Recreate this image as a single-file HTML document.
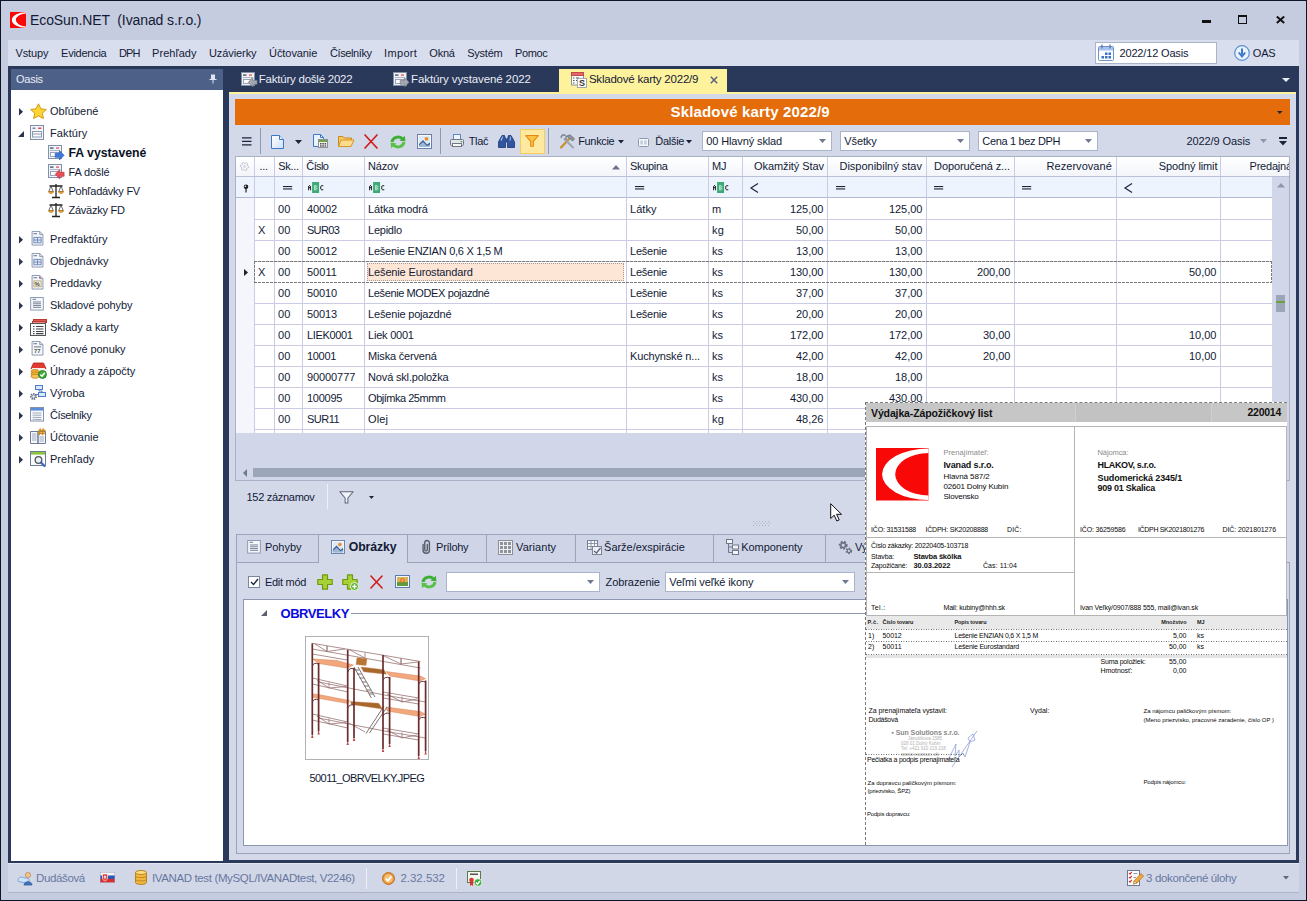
<!DOCTYPE html>
<html><head><meta charset="utf-8"><title>EcoSun.NET</title>
<style>
html,body{margin:0;padding:0;}
body{width:1307px;height:901px;overflow:hidden;background:#c6ccdf;font-family:"Liberation Sans",sans-serif;font-size:11px;color:#121a36;position:relative;}
div,span.t,svg{position:absolute;box-sizing:border-box;}
span.t{white-space:nowrap;}
svg{overflow:visible;}
</style></head><body>
<!-- window frame -->
<div style="left:0px;top:0px;width:1307px;height:901px;border:1px solid #0d1626;background:#c6ccdf;"></div>
<svg style="left:10px;top:12px" width="16" height="16" viewBox="0 0 52 52"><rect width="52" height="52" fill="#f90808"/><path d="M52 0.5A46 25.500 0 0 0 52 51.500V47A33 21 0 0 1 52 5Z" fill="#fff"/></svg>
<span class="t" style="left:30.0px;top:10.5px;line-height:18px;font-size:14px;color:#121a36;letter-spacing:-0.097px;white-space:pre;">EcoSun.NET  (Ivanad s.r.o.)</span>
<div style="left:1201.5px;top:20px;width:9.5px;height:3px;background:#111;"></div>
<div style="left:1237.7px;top:15px;width:9.5px;height:9.3px;border:1.500px solid #111;border-top-width:2px;"></div>
<svg style="left:1276px;top:16px" width="9" height="7.5" viewBox="0 0 9 7.5"><path d="M0.8 0.6L8.200 6.900M8.200 0.600L0.800 6.900" stroke="#111" stroke-width="2"/></svg>
<!-- menu bar -->
<div style="left:8px;top:40px;width:1291px;height:26px;background:#d9deee;"></div>
<span class="t" style="left:15.4px;top:46.3px;line-height:14px;font-size:11px;color:#121a36;letter-spacing:-0.093px;">Vstupy</span>
<span class="t" style="left:61.1px;top:46.3px;line-height:14px;font-size:11px;color:#121a36;letter-spacing:-0.258px;">Evidencia</span>
<span class="t" style="left:118.9px;top:46.3px;line-height:14px;font-size:11px;color:#121a36;letter-spacing:-0.873px;">DPH</span>
<span class="t" style="left:152.1px;top:46.3px;line-height:14px;font-size:11px;color:#121a36;letter-spacing:0.025px;">Prehľady</span>
<span class="t" style="left:208.9px;top:46.3px;line-height:14px;font-size:11px;color:#121a36;letter-spacing:-0.076px;">Uzávierky</span>
<span class="t" style="left:269.1px;top:46.3px;line-height:14px;font-size:11px;color:#121a36;letter-spacing:-0.082px;">Účtovanie</span>
<span class="t" style="left:330.0px;top:46.3px;line-height:14px;font-size:11px;color:#121a36;letter-spacing:-0.394px;">Číselníky</span>
<span class="t" style="left:384.1px;top:46.3px;line-height:14px;font-size:11px;color:#121a36;letter-spacing:0.319px;">Import</span>
<span class="t" style="left:429.3px;top:46.3px;line-height:14px;font-size:11px;color:#121a36;letter-spacing:-0.203px;">Okná</span>
<span class="t" style="left:467.2px;top:46.3px;line-height:14px;font-size:11px;color:#121a36;letter-spacing:-0.231px;">Systém</span>
<span class="t" style="left:515.0px;top:46.3px;line-height:14px;font-size:11px;color:#121a36;letter-spacing:-0.39px;">Pomoc</span>
<div style="left:1095px;top:42px;width:122px;height:22px;background:#fff;border:1px solid #a9b3c9;"></div>
<svg style="left:1098px;top:44px" width="16" height="17" viewBox="0 0 16 17"><rect x="0.500" y="2.500" width="15" height="14" rx="1" fill="#fafcff" stroke="#6f8fc8"/><rect x="1" y="3" width="14" height="3.500" fill="#a9c4ee"/><path d="M4 0.500V4.500M12 0.500V4.500" stroke="#5a78b0" stroke-width="1.300"/><g fill="#3f6fc0"><rect x="7" y="8.500" width="2.500" height="2.500"/><rect x="10.500" y="8.500" width="2.500" height="2.500"/><rect x="3.500" y="12" width="2.500" height="2.500"/><rect x="7" y="12" width="2.500" height="2.500"/><rect x="10.500" y="12" width="2.500" height="2.500"/></g></svg>
<span class="t" style="left:1119.5px;top:46.3px;line-height:14px;font-size:11px;color:#121a36;letter-spacing:-0.162px;">2022/12 Oasis</span>
<svg style="left:1234px;top:45px" width="16" height="16" viewBox="0 0 16 16"><circle cx="8" cy="8" r="7.300" fill="#eaf2fc" stroke="#5a8fd0" stroke-width="1.200"/><path d="M8 3.500V9.500M4.800 7.500L8 11.500L11.200 7.500" stroke="#3f78c8" stroke-width="2" fill="none"/></svg>
<span class="t" style="left:1252.8px;top:46.3px;line-height:14px;font-size:11px;color:#121a36;letter-spacing:-0.217px;">OAS</span>
<!-- navy work area -->
<div style="left:8px;top:66px;width:1291px;height:797px;background:#2a3859;"></div>
<div style="left:11px;top:69px;width:212px;height:21px;background:#4d6088;"></div>
<span class="t" style="left:16px;top:72.0px;line-height:14px;font-size:11px;color:#e8ecf6;letter-spacing:-0.25px;">Oasis</span>
<svg style="left:209px;top:74px" width="8" height="10" viewBox="0 0 8 10"><path d="M2 0.500H6V5H7.500V6H4.500V9.500H3.500V6H0.500V5H2Z" fill="#dfe5f2"/></svg>
<div style="left:11px;top:90px;width:212px;height:771px;background:#fff;"></div>
<svg style="left:19px;top:108.2px" width="4" height="7.5" viewBox="0 0 4 7.5"><path d="M0 0V7.5L4 3.75Z" fill="#2a3350"/></svg>
<svg style="left:29.5px;top:102.5px" width="17" height="17" viewBox="0 0 17 17"><path d="M8.5 0.8L10.9 5.8L16.3 6.5L12.3 10.2L13.4 15.6L8.5 12.9L3.6 15.6L4.7 10.2L0.7 6.5L6.1 5.8Z" fill="#fcd436" stroke="#d59a10" stroke-width="1" stroke-linejoin="round"/></svg>
<span class="t" style="left:50.0px;top:104.0px;line-height:14px;font-size:11px;color:#121a36;letter-spacing:-0.014px;">Obľúbené</span>
<svg style="left:18px;top:131px" width="6" height="6" viewBox="0 0 6 6"><path d="M6 0V6H0Z" fill="#2a3350"/></svg>
<svg style="left:30px;top:124.7px" width="15" height="16" viewBox="0 0 15 16"><rect x="0.5" y="0.5" width="13" height="14" fill="#f3f6fb" stroke="#7f8da6"/><rect x="2.5" y="2.5" width="3" height="1.5" fill="#7b88a0"/><rect x="8" y="2.5" width="3.5" height="1.5" fill="#e05656"/><rect x="2.5" y="6.5" width="9" height="5.5" fill="#fff" stroke="#8d9ab3"/><path d="M2.5 9H11.5" stroke="#8d9ab3"/></svg>
<span class="t" style="left:50.0px;top:126.0px;line-height:14px;font-size:11px;color:#121a36;letter-spacing:0.116px;">Faktúry</span>
<svg style="left:48px;top:145px" width="17" height="16" viewBox="0 0 17 16"><rect x="0.5" y="0.5" width="13" height="13" fill="#f1f4fa" stroke="#8290aa"/><rect x="2" y="2.3" width="3.5" height="1.6" fill="#5f6c85"/><rect x="8" y="2.3" width="3" height="1.6" fill="#e8707a"/><path d="M2 5.5H11.500" stroke="#9aa5bb" stroke-width="0.8"/><rect x="2.500" y="7.500" width="8.500" height="4" fill="#fff" stroke="#8f9bb2" stroke-width="0.9"/><path d="M7.200 8.300H11.500V5.500L16.100 10.300L11.500 15V12.300H7.200Z" fill="#3d78dc" stroke="#2555b0" stroke-width="0.6" stroke-linejoin="round"/></svg>
<span class="t" style="left:68.5px;top:146.0px;line-height:14px;font-size:12.3px;color:#0c1226;font-weight:bold;letter-spacing:-0.025px;">FA vystavené</span>
<svg style="left:48px;top:164px" width="17" height="16" viewBox="0 0 17 16"><rect x="0.5" y="0.5" width="13" height="13" fill="#f1f4fa" stroke="#8290aa"/><rect x="2" y="2.3" width="3.5" height="1.6" fill="#5f6c85"/><rect x="8" y="2.3" width="3" height="1.6" fill="#e8707a"/><path d="M2 5.5H11.500" stroke="#9aa5bb" stroke-width="0.8"/><rect x="2.500" y="7.500" width="8.500" height="4" fill="#fff" stroke="#8f9bb2" stroke-width="0.9"/><path d="M16.100 8.300H11.800V5.500L7.200 10.300L11.800 15V12.300H16.100Z" fill="#e8505a" stroke="#b82a36" stroke-width="0.6" stroke-linejoin="round"/></svg>
<span class="t" style="left:68.5px;top:165.0px;line-height:14px;font-size:11px;color:#121a36;letter-spacing:-0.152px;">FA došlé</span>
<svg style="left:47.7px;top:182.5px" width="16" height="16" viewBox="0 0 16 16"><path d="M8 1V14M4 14.5H12M1.5 3H14.5" stroke="#222" stroke-width="1.3" fill="none"/><path d="M3 3L0.8 8.5H5.2ZM13 3L10.8 8.5H15.2Z" fill="none" stroke="#444" stroke-width="0.8"/><path d="M0.5 8.5H5.5A2.5 2 0 0 1 0.5 8.5ZM10.5 8.5H15.5A2.5 2 0 0 1 10.5 8.5Z" fill="#e9a23b" stroke="#b5741a" stroke-width="0.6"/></svg>
<span class="t" style="left:68.5px;top:184.0px;line-height:14px;font-size:11px;color:#121a36;letter-spacing:-0.254px;">Pohľadávky FV</span>
<svg style="left:47.7px;top:201.7px" width="16" height="16" viewBox="0 0 16 16"><path d="M8 1V14M4 14.5H12M1.5 3H14.5" stroke="#222" stroke-width="1.3" fill="none"/><path d="M3 3L0.8 8.5H5.2ZM13 3L10.8 8.5H15.2Z" fill="none" stroke="#444" stroke-width="0.8"/><path d="M0.5 8.5H5.5A2.5 2 0 0 1 0.5 8.5ZM10.5 8.5H15.5A2.5 2 0 0 1 10.5 8.5Z" fill="#e9a23b" stroke="#b5741a" stroke-width="0.6"/></svg>
<span class="t" style="left:68.5px;top:203.0px;line-height:14px;font-size:11px;color:#121a36;letter-spacing:-0.259px;">Záväzky FD</span>
<svg style="left:19px;top:236.2px" width="4" height="7.5" viewBox="0 0 4 7.5"><path d="M0 0V7.5L4 3.75Z" fill="#2a3350"/></svg>
<svg style="left:31px;top:231.2px" width="13" height="14.5" viewBox="0 0 13 16"><path d="M0.5 0.5H9L12.5 4V15.5H0.5Z" fill="#f4f7fc" stroke="#8492ab"/><path d="M9 0.5V4H12.5" fill="none" stroke="#8492ab"/><rect x="2" y="2.3" width="4" height="1.3" fill="#7b88a0"/><rect x="2.5" y="7" width="8" height="6" fill="#dfe8f6" stroke="#6f86b4"/><path d="M2.5 10H10.5M6.5 7V13" stroke="#6f86b4"/></svg>
<span class="t" style="left:50.0px;top:232.0px;line-height:14px;font-size:11px;color:#121a36;letter-spacing:0.129px;">Predfaktúry</span>
<svg style="left:19px;top:258.2px" width="4" height="7.5" viewBox="0 0 4 7.5"><path d="M0 0V7.5L4 3.75Z" fill="#2a3350"/></svg>
<svg style="left:31px;top:253.2px" width="13" height="14.5" viewBox="0 0 13 16"><path d="M0.5 0.5H9L12.5 4V15.5H0.5Z" fill="#f4f7fc" stroke="#8492ab"/><path d="M9 0.5V4H12.5" fill="none" stroke="#8492ab"/><rect x="2" y="2.3" width="4" height="1.3" fill="#7b88a0"/><rect x="2.5" y="7" width="8" height="6" fill="#dfe8f6" stroke="#6f86b4"/><path d="M2.5 10H10.5M6.5 7V13" stroke="#6f86b4"/></svg>
<span class="t" style="left:50.0px;top:254.0px;line-height:14px;font-size:11px;color:#121a36;letter-spacing:0.037px;">Objednávky</span>
<svg style="left:19px;top:280.2px" width="4" height="7.5" viewBox="0 0 4 7.5"><path d="M0 0V7.5L4 3.75Z" fill="#2a3350"/></svg>
<svg style="left:31px;top:275.2px" width="13" height="14.5" viewBox="0 0 13 16"><path d="M0.5 0.5H9L12.5 4V15.5H0.5Z" fill="#f4f7fc" stroke="#8492ab"/><path d="M9 0.5V4H12.5" fill="none" stroke="#8492ab"/><rect x="2" y="2.3" width="4" height="1.3" fill="#7b88a0"/><rect x="2.5" y="6.5" width="8" height="6.5" fill="#fbf3dc" stroke="#b9a77a"/><text x="3.3" y="12.2" font-size="6.5" font-weight="bold" fill="#444" font-family="Liberation Sans">%</text><rect x="8" y="2.3" width="2" height="1.3" fill="#e05656"/></svg>
<span class="t" style="left:50.0px;top:276.0px;line-height:14px;font-size:11px;color:#121a36;letter-spacing:-0.067px;">Preddavky</span>
<svg style="left:19px;top:302.2px" width="4" height="7.5" viewBox="0 0 4 7.5"><path d="M0 0V7.5L4 3.75Z" fill="#2a3350"/></svg>
<svg style="left:30.2px;top:297.3px" width="14" height="13.5" viewBox="0 0 15 15"><rect x="0.5" y="0.5" width="14" height="14" fill="#f6f8fc" stroke="#8492ab"/><rect x="2.5" y="2" width="4" height="1.2" fill="#7b88a0"/><path d="M3 5.5H12M3 7.5H12M3 9.5H12M3 11.5H12" stroke="#6b7890" stroke-width="1"/></svg>
<span class="t" style="left:50.0px;top:298.0px;line-height:14px;font-size:11px;color:#121a36;letter-spacing:-0.09px;">Skladové pohyby</span>
<svg style="left:19px;top:324.2px" width="4" height="7.5" viewBox="0 0 4 7.5"><path d="M0 0V7.5L4 3.75Z" fill="#2a3350"/></svg>
<svg style="left:30px;top:318.5px" width="17" height="17" viewBox="0 0 17 17"><rect x="3.5" y="0.5" width="13" height="3" fill="#e8564e" stroke="#b93a33"/><rect x="2.5" y="2.5" width="13" height="3" fill="#f28a84" stroke="#b93a33"/><rect x="0.5" y="4.5" width="15" height="12" fill="#fbfcfe" stroke="#555"/><path d="M3 7.5H4.5M6 7.5H13.5M3 10H4.5M6 10H13.5M3 12.5H4.5M6 12.5H13.5M3 14.6H4.5M6 14.6H13.5" stroke="#444" stroke-width="1.1"/></svg>
<span class="t" style="left:50.0px;top:320.0px;line-height:14px;font-size:11px;color:#121a36;letter-spacing:-0.03px;">Sklady a karty</span>
<svg style="left:19px;top:346.2px" width="4" height="7.5" viewBox="0 0 4 7.5"><path d="M0 0V7.5L4 3.75Z" fill="#2a3350"/></svg>
<svg style="left:31px;top:341.2px" width="13" height="14.5" viewBox="0 0 13 16"><path d="M0.5 0.5H9L12.5 4V15.5H0.5Z" fill="#f4f7fc" stroke="#8492ab"/><path d="M9 0.5V4H12.5" fill="none" stroke="#8492ab"/><rect x="2" y="2.3" width="4" height="1.3" fill="#7b88a0"/><path d="M2.5 6.5H10.5" stroke="#666"/><text x="2.6" y="13" font-size="6.5" font-weight="bold" fill="#555" font-family="Liberation Sans">77</text></svg>
<span class="t" style="left:50.0px;top:342.0px;line-height:14px;font-size:11px;color:#121a36;letter-spacing:-0.069px;">Cenové ponuky</span>
<svg style="left:19px;top:368.2px" width="4" height="7.5" viewBox="0 0 4 7.5"><path d="M0 0V7.5L4 3.75Z" fill="#2a3350"/></svg>
<svg style="left:30px;top:362px" width="17" height="17" viewBox="0 0 17 17"><path d="M1 6.5L3.5 1H13.5L16 6.5Z" fill="#e23a30" stroke="#b0261e" stroke-width="0.8"/><rect x="2" y="6" width="13" height="3" fill="#f6f1ea"/><ellipse cx="5" cy="9.5" rx="4" ry="2" fill="#f2b23a" stroke="#b67a12" stroke-width="0.7"/><ellipse cx="5" cy="12" rx="4" ry="2" fill="#f2b23a" stroke="#b67a12" stroke-width="0.7"/><ellipse cx="5" cy="14.3" rx="4" ry="2" fill="#f6c456" stroke="#b67a12" stroke-width="0.7"/><circle cx="12.5" cy="12.5" r="4" fill="#3bab3b" stroke="#1e7a22" stroke-width="0.8"/><path d="M10.4 12.6L12 14.2L14.8 10.8" stroke="#fff" stroke-width="1.5" fill="none"/></svg>
<span class="t" style="left:50.0px;top:364.0px;line-height:14px;font-size:11px;color:#121a36;letter-spacing:-0.016px;">Úhrady a zápočty</span>
<svg style="left:19px;top:390.2px" width="4" height="7.5" viewBox="0 0 4 7.5"><path d="M0 0V7.5L4 3.75Z" fill="#2a3350"/></svg>
<svg style="left:29px;top:385px" width="17" height="15" viewBox="0 0 17 15"><rect x="6.5" y="0.5" width="7" height="4" fill="#dbe8fa" stroke="#4c7dc6"/><rect x="9.500" y="7.5" width="7" height="4" fill="#dbe8fa" stroke="#4c7dc6"/><path d="M10 4.5V6H13V7.5M6 9.5H9.500" stroke="#4c7dc6" fill="none"/><circle cx="4.500" cy="11.5" r="2.6" fill="none" stroke="#6a7388" stroke-width="1.8" stroke-dasharray="1.4 0.9"/><circle cx="4.500" cy="11.5" r="1.6" fill="#f3f5f9" stroke="#6a7388" stroke-width="0.8"/></svg>
<span class="t" style="left:50.0px;top:386.0px;line-height:14px;font-size:11px;color:#121a36;letter-spacing:-0.046px;">Výroba</span>
<svg style="left:19px;top:412.2px" width="4" height="7.5" viewBox="0 0 4 7.5"><path d="M0 0V7.5L4 3.75Z" fill="#2a3350"/></svg>
<svg style="left:30px;top:407px" width="14" height="14.5" viewBox="0 0 14 14.5"><rect x="0.5" y="0.5" width="13" height="13.500" fill="#fbfcfe" stroke="#8792aa"/><rect x="1" y="1" width="12" height="2.600" fill="#5b8fdc"/><path d="M2.500 6H11.500M2.500 8.200H11.500M2.500 10.400H11.500M2.500 12.400H11.500" stroke="#8f9ab0" stroke-width="0.900"/><path d="M4.500 4.500V13.500" stroke="#d3d9e6" stroke-width="0.800"/></svg>
<span class="t" style="left:50.0px;top:408.0px;line-height:14px;font-size:11px;color:#121a36;letter-spacing:-0.417px;">Číselníky</span>
<svg style="left:19px;top:434.2px" width="4" height="7.5" viewBox="0 0 4 7.5"><path d="M0 0V7.5L4 3.75Z" fill="#2a3350"/></svg>
<svg style="left:30px;top:428px" width="16" height="16" viewBox="0 0 16 16"><path d="M0.5 3.5H8V15.5H0.5ZM8 3.5H15.500V15.5H8Z" fill="#f5f7fb" stroke="#6e7c98"/><path d="M2 6H6.500M2 8H6.500M2 10H6.500M2 12H6.500M9.500 9H14M9.500 11H14M9.500 13H14" stroke="#94a0b8" stroke-width="0.9"/><path d="M10.300 0.300L9.400 7.200M13.300 0.300L12.400 7.200M8.500 2.500H15.500M8.200 5.200H15.200" stroke="#d08a12" stroke-width="1.4" fill="none"/></svg>
<span class="t" style="left:50.0px;top:430.0px;line-height:14px;font-size:11px;color:#121a36;letter-spacing:-0.049px;">Účtovanie</span>
<svg style="left:19px;top:456.2px" width="4" height="7.5" viewBox="0 0 4 7.5"><path d="M0 0V7.5L4 3.75Z" fill="#2a3350"/></svg>
<svg style="left:30px;top:451px" width="16" height="16" viewBox="0 0 16 16"><rect x="0.5" y="0.5" width="15" height="14" fill="#fbfcfe" stroke="#6c7c99"/><rect x="1" y="1" width="14" height="2.6" fill="#8cc63e"/><circle cx="8.500" cy="9" r="3.3" fill="#e9f1fb" stroke="#555" stroke-width="1.3"/><path d="M11 11.5L14.5 15" stroke="#3b68b8" stroke-width="2.2" stroke-linecap="round"/></svg>
<span class="t" style="left:50.0px;top:452.0px;line-height:14px;font-size:11px;color:#121a36;letter-spacing:0.025px;">Prehľady</span>
<!-- document tabs -->
<svg style="left:241px;top:72px" width="17" height="16" viewBox="0 0 17 16"><rect x="0.5" y="0.5" width="13" height="13" fill="#f2f2f2" stroke="#8290aa"/><rect x="2" y="2.3" width="3.5" height="1.6" fill="#5f6c85"/><rect x="8" y="2.3" width="3" height="1.6" fill="#e8707a"/><path d="M2 5.5H11.500" stroke="#9aa5bb" stroke-width="0.8"/><rect x="2.500" y="7.500" width="8.500" height="4" fill="#fff" stroke="#8f9bb2" stroke-width="0.9"/><path d="M16.100 8.300H11.800V5.500L7.200 10.300L11.800 15V12.300H16.100Z" fill="#a3a8b0" stroke="#6e737b" stroke-width="0.6" stroke-linejoin="round"/></svg>
<span class="t" style="left:258.8px;top:72.0px;line-height:14px;font-size:11.5px;color:#e9edf6;letter-spacing:-0.231px;">Faktúry došlé 2022</span>
<svg style="left:393px;top:72px" width="17" height="16" viewBox="0 0 17 16"><rect x="0.5" y="0.5" width="13" height="13" fill="#f2f2f2" stroke="#8290aa"/><rect x="2" y="2.3" width="3.5" height="1.6" fill="#5f6c85"/><rect x="8" y="2.3" width="3" height="1.6" fill="#e8707a"/><path d="M2 5.5H11.500" stroke="#9aa5bb" stroke-width="0.8"/><rect x="2.500" y="7.500" width="8.500" height="4" fill="#fff" stroke="#8f9bb2" stroke-width="0.9"/><path d="M7.200 8.300H11.500V5.500L16.100 10.300L11.500 15V12.300H7.200Z" fill="#a3a8b0" stroke="#6e737b" stroke-width="0.6" stroke-linejoin="round"/></svg>
<span class="t" style="left:411.1px;top:72.0px;line-height:14px;font-size:11.5px;color:#e9edf6;letter-spacing:-0.11px;">Faktúry vystavené 2022</span>
<div style="left:559px;top:69px;width:168px;height:25px;background:#fff29d;"></div>
<svg style="left:571px;top:72px" width="16" height="16" viewBox="0 0 16 16"><rect x="0.500" y="0.500" width="12" height="12.500" fill="#fbfcfe" stroke="#8a8f9a"/><rect x="0.500" y="0.500" width="12" height="3" fill="#e8686a" stroke="#c04a4e"/><path d="M2 6H3.500M2 8.500H3.500M2 11H3.500M5 6H8M5 8.500H6" stroke="#555" stroke-width="1.100"/><rect x="6.300" y="6.300" width="9.200" height="9.200" fill="#fdfdfd" stroke="#8a8f9a" stroke-width="0.800"/><text x="8" y="14.200" font-size="9" font-weight="bold" fill="#333" font-family="Liberation Sans">S</text></svg>
<span class="t" style="left:588.9px;top:72.0px;line-height:14px;font-size:11.5px;color:#121a36;letter-spacing:-0.21px;">Skladové karty 2022/9</span>
<svg style="left:710px;top:76px" width="8" height="8" viewBox="0 0 8 8"><path d="M0.800 0.800L7.200 7.200M7.200 0.800L0.800 7.200" stroke="#59627a" stroke-width="1.500"/></svg>
<svg style="left:1282px;top:78px" width="8" height="4" viewBox="0 0 8 4"><path d="M0 0H8L4.0 4Z" fill="#e9edf6"/></svg>
<div style="left:229px;top:92px;width:1067px;height:2px;background:#fff29d;"></div>
<!-- content panel -->
<div style="left:229px;top:94px;width:1067px;height:766px;background:#d4d9ea;"></div>
<div style="left:235px;top:99px;width:1055px;height:26px;background:#e46c0a;"></div>
<span class="t" style="left:670.5px;top:103.0px;line-height:18px;font-size:15px;color:#fff;font-weight:bold;letter-spacing:0.163px;">Skladové karty 2022/9</span>
<svg style="left:1277px;top:111px" width="5.5" height="3" viewBox="0 0 5.5 3"><path d="M0 0H5.5L2.75 3Z" fill="#1c2438"/></svg>
<svg style="left:242px;top:137px" width="10" height="9" viewBox="0 0 10 9"><path d="M0 0.800H9.500M0 4.300H9.500M0 7.800H9.500" stroke="#1c2438" stroke-width="1.300"/></svg>
<div style="left:260px;top:128px;width:1px;height:26px;background:#8f99b0;"></div>
<svg style="left:270.5px;top:134.5px" width="13" height="14" viewBox="0 0 13 14"><defs><linearGradient id="gd" x1="0" y1="0" x2="1" y2="1"><stop offset="0" stop-color="#ffffff"/><stop offset="1" stop-color="#cfe0f7"/></linearGradient></defs><path d="M0.5 0.5H8.5L12.5 4.5V13.5H0.5Z" fill="url(#gd)" stroke="#3f78c8" stroke-width="1"/><path d="M8.5 0.5V4.5H12.5" fill="#e8f0fb" stroke="#3f78c8" stroke-width="1"/></svg>
<svg style="left:295px;top:139.5px" width="7" height="4" viewBox="0 0 7 4"><path d="M0 0H7L3.5 4Z" fill="#1c2438"/></svg>
<svg style="left:313px;top:134px" width="15" height="14" viewBox="0 0 15 14"><path d="M0.5 0.5H7.5L10.5 3.5V12.5H0.5Z" fill="#eaf2fc" stroke="#3f78c8"/><path d="M7.5 0.5V3.5H10.5" fill="none" stroke="#3f78c8"/><rect x="5.5" y="5.5" width="9" height="8" fill="#f4f4f4" stroke="#8a8f98"/><rect x="6" y="6" width="8" height="2" fill="#6fa53a"/><g fill="#555"><rect x="7" y="9" width="1.6" height="1.5"/><rect x="9.3" y="9" width="1.6" height="1.5"/><rect x="11.6" y="9" width="1.6" height="1.5"/><rect x="7" y="11.2" width="1.6" height="1.5"/><rect x="9.3" y="11.2" width="1.6" height="1.5"/><rect x="11.6" y="11.2" width="1.6" height="1.5"/></g></svg>
<svg style="left:337.5px;top:135px" width="17" height="12" viewBox="0 0 17 12"><path d="M0.5 11.5V1.5H5L6.5 3H13.5V5" fill="#f7c86a" stroke="#c98a1c"/><path d="M0.5 11.5L3 5H16L13 11.5Z" fill="#fbdc8e" stroke="#d6961f"/></svg>
<svg style="left:364px;top:133.5px" width="14" height="15" viewBox="0 0 14 15"><path d="M1 1L13 14M13 1L1 14" stroke="#d31b1b" stroke-width="1.7" stroke-linecap="round" fill="none"/></svg>
<svg style="left:390px;top:134.5px" width="16" height="14.0" viewBox="0 0 16 14"><path d="M2 7A6 5.5 0 0 1 12.5 4" fill="none" stroke="#3fae36" stroke-width="3"/><path d="M9.5 5.8L15.5 6.3L14.8 0.8Z" fill="#3fae36"/><path d="M14 7A6 5.5 0 0 1 3.5 10" fill="none" stroke="#58c248" stroke-width="3"/><path d="M6.5 8.2L0.5 7.7L1.2 13.2Z" fill="#58c248"/></svg>
<svg style="left:416.5px;top:133.5px" width="15" height="15" viewBox="0 0 15 15"><rect x="0.5" y="0.5" width="14" height="14" fill="#f7fbff" stroke="#6a7fa8"/><rect x="2" y="2" width="11" height="11" fill="#dce9f7"/><circle cx="9.5" cy="4.8" r="1.9" fill="#f08a2a"/><path d="M2 13V10L6 6L10 10.5L13 8.5V13Z" fill="#3d5f93"/><path d="M2 13V11.5L6 8L10 12L13 10.5V13Z" fill="#9fb7d6"/></svg>
<div style="left:440px;top:128px;width:1px;height:26px;background:#8f99b0;"></div>
<svg style="left:450px;top:134px" width="14" height="13" viewBox="0 0 14 13"><rect x="3.5" y="0.5" width="7" height="6" fill="#eef5ff" stroke="#5d86c4"/><rect x="0.5" y="5.5" width="13" height="6" rx="1" fill="#e2e5ea" stroke="#70777f"/><rect x="2.5" y="9.5" width="9" height="3" fill="#fafafa" stroke="#70777f"/><rect x="10.5" y="7" width="1.6" height="1.2" fill="#46a33a"/></svg>
<span class="t" style="left:468.7px;top:134.0px;line-height:14px;font-size:11px;color:#121a36;letter-spacing:-0.345px;">Tlač</span>
<svg style="left:497.5px;top:134.5px" width="17" height="13" viewBox="0 0 17 13"><path d="M2 4L4 0.5H6.5L7.5 4V12.5H0.5V7Z" fill="#31569f" stroke="#1b3670" stroke-width="0.8"/><path d="M15 4L13 0.5H10.5L9.5 4V12.5H16.5V7Z" fill="#31569f" stroke="#1b3670" stroke-width="0.8"/><rect x="7" y="3.5" width="3" height="4" fill="#2a4d93"/><path d="M2.5 5L4.3 1.5H5.2L3.5 6Z" fill="#a9c3ee"/><path d="M11.5 5L12.3 1.5H13L12.5 6Z" fill="#a9c3ee"/></svg>
<div style="left:519.5px;top:129px;width:25.5px;height:25px;background:#ffe9a0;border:1px solid #f3ce5c;"></div>
<svg style="left:525px;top:134.3px" width="14" height="14" viewBox="0 0 16 14"><path d="M0.8 0.8H15.2L9.5 7.5V13H6.5V7.5Z" fill="#fbc044" stroke="#e08a12" stroke-width="1.2" stroke-linejoin="round"/></svg>
<div style="left:548px;top:128px;width:1px;height:26px;background:#8f99b0;"></div>
<svg style="left:559px;top:133.5px" width="16" height="15" viewBox="0 0 16 15"><path d="M2 13.5L10 5" stroke="#c9922e" stroke-width="2.4" stroke-linecap="round"/><path d="M8 2L11 0.8L15.5 4.8L13.5 7Z" fill="#8b95a4" stroke="#5b6573" stroke-width="0.7"/><path d="M14 13.5L5.5 5" stroke="#9aa3b1" stroke-width="2" stroke-linecap="round"/><path d="M2.2 3.8A2.6 2.6 0 1 1 6.5 5.5" fill="none" stroke="#7d8796" stroke-width="1.6"/></svg>
<span class="t" style="left:578.2px;top:134.0px;line-height:14px;font-size:11px;color:#121a36;letter-spacing:-0.333px;">Funkcie</span>
<svg style="left:618px;top:139.5px" width="6" height="3.5" viewBox="0 0 6 3.5"><path d="M0 0H6L3.0 3.5Z" fill="#1c2438"/></svg>
<svg style="left:638px;top:137.5px" width="11" height="9" viewBox="0 0 11 9"><rect x="0.5" y="0.5" width="10" height="8" rx="1" fill="#f4f6fb" stroke="#8e98ad"/><rect x="2.3" y="2.5" width="2.6" height="4" fill="#c5ccdc"/><rect x="6.1" y="2.5" width="2.6" height="4" fill="#c5ccdc"/></svg>
<span class="t" style="left:655.3px;top:134.0px;line-height:14px;font-size:11px;color:#121a36;letter-spacing:-0.294px;">Ďalšie</span>
<svg style="left:686px;top:139.5px" width="6" height="3.5" viewBox="0 0 6 3.5"><path d="M0 0H6L3.0 3.5Z" fill="#1c2438"/></svg>
<div style="left:702px;top:131px;width:130px;height:20px;background:#fff;border:1px solid #a9b3c9;"></div>
<span class="t" style="left:706.3px;top:134.0px;line-height:14px;font-size:11px;color:#121a36;letter-spacing:-0.126px;">00 Hlavný sklad</span>
<svg style="left:819px;top:139.0px" width="7" height="4" viewBox="0 0 7 4"><path d="M0 0H7L3.5 4Z" fill="#6f7a92"/></svg>
<div style="left:840px;top:131px;width:130px;height:20px;background:#fff;border:1px solid #a9b3c9;"></div>
<span class="t" style="left:844.3px;top:134.0px;line-height:14px;font-size:11px;color:#121a36;letter-spacing:-0.122px;">Všetky</span>
<svg style="left:957px;top:139.0px" width="7" height="4" viewBox="0 0 7 4"><path d="M0 0H7L3.5 4Z" fill="#6f7a92"/></svg>
<div style="left:978px;top:131px;width:120px;height:20px;background:#fff;border:1px solid #a9b3c9;"></div>
<span class="t" style="left:982.3px;top:134.0px;line-height:14px;font-size:11px;color:#121a36;letter-spacing:-0.335px;">Cena 1 bez DPH</span>
<svg style="left:1085px;top:139.0px" width="7" height="4" viewBox="0 0 7 4"><path d="M0 0H7L3.5 4Z" fill="#6f7a92"/></svg>
<span class="t" style="left:1186.5px;top:134.0px;line-height:14px;font-size:11px;color:#121a36;letter-spacing:-0.098px;">2022/9 Oasis</span>
<svg style="left:1260px;top:139px" width="7" height="4" viewBox="0 0 7 4"><path d="M0 0H7L3.5 4Z" fill="#8d97ad"/></svg>
<div style="left:1279px;top:137px;width:8px;height:2px;background:#1c2438;"></div>
<svg style="left:1279px;top:140.5px" width="8" height="4.5" viewBox="0 0 8 4.5"><path d="M0 0H8L4.0 4.5Z" fill="#1c2438"/></svg>
<!-- grid -->
<div style="left:235px;top:156px;width:1055px;height:325px;border:1px solid #aab1c6;background:#d1d7e9;"></div>
<div style="left:236px;top:157px;width:1053px;height:19px;background:linear-gradient(#ffffff,#f3f5fa);"></div>
<div style="left:236px;top:177px;width:1036px;height:21px;background:#eef4fd;border-bottom:1.500px solid #b4b9d2;"></div>
<div style="left:254px;top:198px;width:1018px;height:235px;background:#fff;"></div>
<div style="left:236px;top:198px;width:18px;height:235px;background:#f4f6fb;"></div>
<svg style="left:240px;top:162px" width="9" height="9" viewBox="0 0 9 9"><path d="M8.80 4.50 L8.65 5.61 L7.27 6.10 L6.76 6.76 L6.65 8.22 L5.61 8.65 L4.50 7.70 L3.67 7.59 L2.35 8.22 L1.46 7.54 L1.73 6.10 L1.41 5.33 L0.20 4.50 L0.35 3.39 L1.73 2.90 L2.24 2.24 L2.35 0.78 L3.39 0.35 L4.50 1.30 L5.33 1.41 L6.65 0.78 L7.54 1.46 L7.27 2.90 L7.59 3.67Z" fill="#f4f5f8" stroke="#b4bac8" stroke-width="0.800" stroke-linejoin="round"/><circle cx="4.500" cy="4.500" r="0.900" fill="none" stroke="#b4bac8" stroke-width="0.600"/></svg>
<span class="t" style="left:259.4px;top:159.3px;line-height:14px;font-size:11px;color:#121a36;letter-spacing:-0.296px;">...</span>
<span class="t" style="left:278.3px;top:159.3px;line-height:14px;font-size:11px;color:#121a36;letter-spacing:-0.326px;">Sk...</span>
<span class="t" style="left:306.3px;top:159.3px;line-height:14px;font-size:11px;color:#121a36;letter-spacing:-0.593px;">Číslo</span>
<span class="t" style="left:368.1px;top:159.3px;line-height:14px;font-size:11px;color:#121a36;letter-spacing:-0.178px;">Názov</span>
<span class="t" style="left:630.0px;top:159.3px;line-height:14px;font-size:11px;color:#121a36;letter-spacing:-0.312px;">Skupina</span>
<span class="t" style="left:712.0px;top:159.3px;line-height:14px;font-size:11px;color:#121a36;letter-spacing:-0.278px;">MJ</span>
<span class="t" style="left:754.1px;top:159.3px;line-height:14px;font-size:11px;color:#121a36;letter-spacing:-0.088px;">Okamžitý Stav</span>
<span class="t" style="left:839.5px;top:159.3px;line-height:14px;font-size:11px;color:#121a36;letter-spacing:-0.01px;">Disponibilný stav</span>
<span class="t" style="left:934.1px;top:159.3px;line-height:14px;font-size:11px;color:#121a36;letter-spacing:-0.128px;">Doporučená z...</span>
<span class="t" style="left:1046.5px;top:159.3px;line-height:14px;font-size:11px;color:#121a36;letter-spacing:0.051px;">Rezervované</span>
<span class="t" style="left:1158.8px;top:159.3px;line-height:14px;font-size:11px;color:#121a36;letter-spacing:-0.111px;">Spodný limit</span>
<div style="left:1221px;top:158px;width:68px;height:18px;overflow:hidden;"><span class="t" style="left:28.5px;top:1.3px;line-height:14px;font-size:11px;color:#121a36;letter-spacing:-0.2px;">Predajná cena</span></div>
<svg style="left:612px;top:165px" width="8" height="4.5" viewBox="0 0 8 4.5"><path d="M0 4.5H8L4.0 0Z" fill="#6b7388"/></svg>
<svg style="left:242.8px;top:184.3px" width="6" height="9" viewBox="0 0 6 9"><circle cx="3" cy="2.800" r="2.300" fill="#222"/><circle cx="2.300" cy="2.200" r="0.800" fill="#fff"/><path d="M3 4V8.500" stroke="#222" stroke-width="1.200"/></svg>
<svg style="left:283px;top:186px" width="9.2" height="4" viewBox="0 0 9.2 4"><rect x="0" y="0" width="9.200" height="1.100" fill="#1c2438"/><rect x="0" y="2.400" width="9.200" height="1.100" fill="#1c2438"/></svg>
<svg style="left:307.8px;top:182px" width="15.3" height="11" viewBox="0 0 15.3 11"><rect x="4.100" y="0" width="7" height="11" fill="#3daa78"/><rect x="1" y="3.2" width="1.05" height="1.05" fill="#111"/><rect x="0" y="4.2" width="1.05" height="1.05" fill="#111"/><rect x="2" y="4.2" width="1.05" height="1.05" fill="#111"/><rect x="0" y="5.2" width="1.05" height="1.05" fill="#111"/><rect x="1" y="5.2" width="1.05" height="1.05" fill="#111"/><rect x="2" y="5.2" width="1.05" height="1.05" fill="#111"/><rect x="0" y="6.2" width="1.05" height="1.05" fill="#111"/><rect x="2" y="6.2" width="1.05" height="1.05" fill="#111"/><rect x="0" y="7.2" width="1.05" height="1.05" fill="#111"/><rect x="2" y="7.2" width="1.05" height="1.05" fill="#111"/><rect x="6.2" y="3.2" width="1.05" height="1.05" fill="#d6f5e6"/><rect x="7.2" y="3.2" width="1.05" height="1.05" fill="#d6f5e6"/><rect x="6.2" y="4.2" width="1.05" height="1.05" fill="#d6f5e6"/><rect x="8.2" y="4.2" width="1.05" height="1.05" fill="#d6f5e6"/><rect x="6.2" y="5.2" width="1.05" height="1.05" fill="#d6f5e6"/><rect x="7.2" y="5.2" width="1.05" height="1.05" fill="#d6f5e6"/><rect x="6.2" y="6.2" width="1.05" height="1.05" fill="#d6f5e6"/><rect x="8.2" y="6.2" width="1.05" height="1.05" fill="#d6f5e6"/><rect x="6.2" y="7.2" width="1.05" height="1.05" fill="#d6f5e6"/><rect x="7.2" y="7.2" width="1.05" height="1.05" fill="#d6f5e6"/><rect x="13.2" y="3.2" width="1.05" height="1.05" fill="#111"/><rect x="14.2" y="3.2" width="1.05" height="1.05" fill="#111"/><rect x="12.2" y="4.2" width="1.05" height="1.05" fill="#111"/><rect x="12.2" y="5.2" width="1.05" height="1.05" fill="#111"/><rect x="12.2" y="6.2" width="1.05" height="1.05" fill="#111"/><rect x="13.2" y="7.2" width="1.05" height="1.05" fill="#111"/><rect x="14.2" y="7.2" width="1.05" height="1.05" fill="#111"/></svg>
<svg style="left:369.3px;top:182px" width="15.3" height="11" viewBox="0 0 15.3 11"><rect x="4.100" y="0" width="7" height="11" fill="#3daa78"/><rect x="1" y="3.2" width="1.05" height="1.05" fill="#111"/><rect x="0" y="4.2" width="1.05" height="1.05" fill="#111"/><rect x="2" y="4.2" width="1.05" height="1.05" fill="#111"/><rect x="0" y="5.2" width="1.05" height="1.05" fill="#111"/><rect x="1" y="5.2" width="1.05" height="1.05" fill="#111"/><rect x="2" y="5.2" width="1.05" height="1.05" fill="#111"/><rect x="0" y="6.2" width="1.05" height="1.05" fill="#111"/><rect x="2" y="6.2" width="1.05" height="1.05" fill="#111"/><rect x="0" y="7.2" width="1.05" height="1.05" fill="#111"/><rect x="2" y="7.2" width="1.05" height="1.05" fill="#111"/><rect x="6.2" y="3.2" width="1.05" height="1.05" fill="#d6f5e6"/><rect x="7.2" y="3.2" width="1.05" height="1.05" fill="#d6f5e6"/><rect x="6.2" y="4.2" width="1.05" height="1.05" fill="#d6f5e6"/><rect x="8.2" y="4.2" width="1.05" height="1.05" fill="#d6f5e6"/><rect x="6.2" y="5.2" width="1.05" height="1.05" fill="#d6f5e6"/><rect x="7.2" y="5.2" width="1.05" height="1.05" fill="#d6f5e6"/><rect x="6.2" y="6.2" width="1.05" height="1.05" fill="#d6f5e6"/><rect x="8.2" y="6.2" width="1.05" height="1.05" fill="#d6f5e6"/><rect x="6.2" y="7.2" width="1.05" height="1.05" fill="#d6f5e6"/><rect x="7.2" y="7.2" width="1.05" height="1.05" fill="#d6f5e6"/><rect x="13.2" y="3.2" width="1.05" height="1.05" fill="#111"/><rect x="14.2" y="3.2" width="1.05" height="1.05" fill="#111"/><rect x="12.2" y="4.2" width="1.05" height="1.05" fill="#111"/><rect x="12.2" y="5.2" width="1.05" height="1.05" fill="#111"/><rect x="12.2" y="6.2" width="1.05" height="1.05" fill="#111"/><rect x="13.2" y="7.2" width="1.05" height="1.05" fill="#111"/><rect x="14.2" y="7.2" width="1.05" height="1.05" fill="#111"/></svg>
<svg style="left:634.5px;top:186px" width="9.2" height="4" viewBox="0 0 9.2 4"><rect x="0" y="0" width="9.200" height="1.100" fill="#1c2438"/><rect x="0" y="2.400" width="9.200" height="1.100" fill="#1c2438"/></svg>
<svg style="left:713.2px;top:182px" width="15.3" height="11" viewBox="0 0 15.3 11"><rect x="4.100" y="0" width="7" height="11" fill="#3daa78"/><rect x="1" y="3.2" width="1.05" height="1.05" fill="#111"/><rect x="0" y="4.2" width="1.05" height="1.05" fill="#111"/><rect x="2" y="4.2" width="1.05" height="1.05" fill="#111"/><rect x="0" y="5.2" width="1.05" height="1.05" fill="#111"/><rect x="1" y="5.2" width="1.05" height="1.05" fill="#111"/><rect x="2" y="5.2" width="1.05" height="1.05" fill="#111"/><rect x="0" y="6.2" width="1.05" height="1.05" fill="#111"/><rect x="2" y="6.2" width="1.05" height="1.05" fill="#111"/><rect x="0" y="7.2" width="1.05" height="1.05" fill="#111"/><rect x="2" y="7.2" width="1.05" height="1.05" fill="#111"/><rect x="6.2" y="3.2" width="1.05" height="1.05" fill="#d6f5e6"/><rect x="7.2" y="3.2" width="1.05" height="1.05" fill="#d6f5e6"/><rect x="6.2" y="4.2" width="1.05" height="1.05" fill="#d6f5e6"/><rect x="8.2" y="4.2" width="1.05" height="1.05" fill="#d6f5e6"/><rect x="6.2" y="5.2" width="1.05" height="1.05" fill="#d6f5e6"/><rect x="7.2" y="5.2" width="1.05" height="1.05" fill="#d6f5e6"/><rect x="6.2" y="6.2" width="1.05" height="1.05" fill="#d6f5e6"/><rect x="8.2" y="6.2" width="1.05" height="1.05" fill="#d6f5e6"/><rect x="6.2" y="7.2" width="1.05" height="1.05" fill="#d6f5e6"/><rect x="7.2" y="7.2" width="1.05" height="1.05" fill="#d6f5e6"/><rect x="13.2" y="3.2" width="1.05" height="1.05" fill="#111"/><rect x="14.2" y="3.2" width="1.05" height="1.05" fill="#111"/><rect x="12.2" y="4.2" width="1.05" height="1.05" fill="#111"/><rect x="12.2" y="5.2" width="1.05" height="1.05" fill="#111"/><rect x="12.2" y="6.2" width="1.05" height="1.05" fill="#111"/><rect x="13.2" y="7.2" width="1.05" height="1.05" fill="#111"/><rect x="14.2" y="7.2" width="1.05" height="1.05" fill="#111"/></svg>
<svg style="left:750px;top:182.5px" width="9" height="10" viewBox="0 0 9 10"><path d="M8 0.5L1 5L8 9.5" fill="none" stroke="#1c2438" stroke-width="1.2"/></svg>
<svg style="left:835.5px;top:186px" width="9.2" height="4" viewBox="0 0 9.2 4"><rect x="0" y="0" width="9.200" height="1.100" fill="#1c2438"/><rect x="0" y="2.400" width="9.200" height="1.100" fill="#1c2438"/></svg>
<svg style="left:933.5px;top:186px" width="9.2" height="4" viewBox="0 0 9.2 4"><rect x="0" y="0" width="9.200" height="1.100" fill="#1c2438"/><rect x="0" y="2.400" width="9.200" height="1.100" fill="#1c2438"/></svg>
<svg style="left:1021.5px;top:186px" width="9.2" height="4" viewBox="0 0 9.2 4"><rect x="0" y="0" width="9.200" height="1.100" fill="#1c2438"/><rect x="0" y="2.400" width="9.200" height="1.100" fill="#1c2438"/></svg>
<svg style="left:1124px;top:182.5px" width="9" height="10" viewBox="0 0 9 10"><path d="M8 0.5L1 5L8 9.5" fill="none" stroke="#1c2438" stroke-width="1.2"/></svg>
<div style="left:254px;top:157px;width:1px;height:276px;background:#cbcbe6;"></div>
<div style="left:274px;top:157px;width:1px;height:276px;background:#cbcbe6;"></div>
<div style="left:302px;top:157px;width:1px;height:276px;background:#cbcbe6;"></div>
<div style="left:364px;top:157px;width:1px;height:276px;background:#cbcbe6;"></div>
<div style="left:626px;top:157px;width:1px;height:276px;background:#cbcbe6;"></div>
<div style="left:708px;top:157px;width:1px;height:276px;background:#cbcbe6;"></div>
<div style="left:742px;top:157px;width:1px;height:276px;background:#cbcbe6;"></div>
<div style="left:827px;top:157px;width:1px;height:276px;background:#cbcbe6;"></div>
<div style="left:926px;top:157px;width:1px;height:276px;background:#cbcbe6;"></div>
<div style="left:1014px;top:157px;width:1px;height:276px;background:#cbcbe6;"></div>
<div style="left:1116px;top:157px;width:1px;height:276px;background:#cbcbe6;"></div>
<div style="left:1220px;top:157px;width:1px;height:276px;background:#cbcbe6;"></div>
<div style="left:1272px;top:177px;width:17px;height:256px;background:#d1d7e9;"></div>
<svg style="left:1276.5px;top:183px" width="8" height="4.5" viewBox="0 0 8 4.5"><path d="M0 4.5H8L4.0 0Z" fill="#8d97ad"/></svg>
<div style="left:1276px;top:295px;width:9px;height:17px;background:#9ba6b9;"></div>
<div style="left:1276px;top:300.5px;width:9px;height:2px;background:#6fa13c;"></div>
<div style="left:236px;top:176px;width:1053px;height:1px;background:#bcc1d8;"></div>
<div style="left:254px;top:218.5px;width:1018px;height:1px;background:#cbcbe6;"></div>
<span class="t" style="left:278.1px;top:202.0px;line-height:14px;font-size:11px;color:#121a36;letter-spacing:-0.025px;">00</span>
<span class="t" style="left:306.9px;top:202.0px;line-height:14px;font-size:11px;color:#121a36;letter-spacing:-0.105px;">40002</span>
<span class="t" style="left:368.1px;top:202.0px;line-height:14px;font-size:11px;color:#121a36;letter-spacing:-0.144px;">Látka modrá</span>
<span class="t" style="left:630.1px;top:202.0px;line-height:14px;font-size:11px;color:#121a36;letter-spacing:0.017px;">Látky</span>
<span class="t" style="left:712.1px;top:202.0px;line-height:14px;font-size:11px;color:#121a36;letter-spacing:0.144px;">m</span>
<span class="t" style="left:742px;top:202.0px;line-height:14px;font-size:11px;color:#121a36;width:81.3px;text-align:right;letter-spacing:-0.06px;">125,00</span>
<span class="t" style="left:827px;top:202.0px;line-height:14px;font-size:11px;color:#121a36;width:95.3px;text-align:right;letter-spacing:-0.06px;">125,00</span>
<div style="left:254px;top:239.5px;width:1018px;height:1px;background:#cbcbe6;"></div>
<span class="t" style="left:258.1px;top:223.0px;line-height:14px;font-size:11px;color:#121a36;letter-spacing:0.056px;">X</span>
<span class="t" style="left:278.1px;top:223.0px;line-height:14px;font-size:11px;color:#121a36;letter-spacing:-0.025px;">00</span>
<span class="t" style="left:306.9px;top:223.0px;line-height:14px;font-size:11px;color:#121a36;letter-spacing:-0.634px;">SUR03</span>
<span class="t" style="left:368.1px;top:223.0px;line-height:14px;font-size:11px;color:#121a36;letter-spacing:-0.257px;">Lepidlo</span>
<span class="t" style="left:712.1px;top:223.0px;line-height:14px;font-size:11px;color:#121a36;letter-spacing:0.087px;">kg</span>
<span class="t" style="left:742px;top:223.0px;line-height:14px;font-size:11px;color:#121a36;width:81.3px;text-align:right;letter-spacing:-0.06px;">50,00</span>
<span class="t" style="left:827px;top:223.0px;line-height:14px;font-size:11px;color:#121a36;width:95.3px;text-align:right;letter-spacing:-0.06px;">50,00</span>
<div style="left:254px;top:260.5px;width:1018px;height:1px;background:#cbcbe6;"></div>
<span class="t" style="left:278.1px;top:244.0px;line-height:14px;font-size:11px;color:#121a36;letter-spacing:-0.025px;">00</span>
<span class="t" style="left:306.9px;top:244.0px;line-height:14px;font-size:11px;color:#121a36;letter-spacing:-0.105px;">50012</span>
<span class="t" style="left:368.1px;top:244.0px;line-height:14px;font-size:11px;color:#121a36;letter-spacing:-0.263px;">Lešenie ENZIAN 0,6 X 1,5 M</span>
<span class="t" style="left:630.1px;top:244.0px;line-height:14px;font-size:11px;color:#121a36;letter-spacing:-0.252px;">Lešenie</span>
<span class="t" style="left:712.1px;top:244.0px;line-height:14px;font-size:11px;color:#121a36;letter-spacing:-0.1px;">ks</span>
<span class="t" style="left:742px;top:244.0px;line-height:14px;font-size:11px;color:#121a36;width:81.3px;text-align:right;letter-spacing:-0.06px;">13,00</span>
<span class="t" style="left:827px;top:244.0px;line-height:14px;font-size:11px;color:#121a36;width:95.3px;text-align:right;letter-spacing:-0.06px;">13,00</span>
<div style="left:254px;top:281.5px;width:1018px;height:1px;background:#cbcbe6;"></div>
<div style="left:366.5px;top:262.5px;width:257.5px;height:18px;background:#fde6d6;border:1px dotted #a89a90;"></div>
<div style="left:254px;top:260.5px;width:1018px;height:1px;background-image:linear-gradient(90deg,#7c7c7c 3px,transparent 3px);background-size:4px 1px;"></div>
<div style="left:254px;top:281.5px;width:1018px;height:1px;background-image:linear-gradient(90deg,#7c7c7c 3px,transparent 3px);background-size:4px 1px;background-color:#fff;"></div>
<div style="left:254px;top:261px;width:1px;height:21px;background-image:linear-gradient(#7c7c7c 3px,transparent 3px);background-size:1px 4px;"></div>
<div style="left:1271px;top:261px;width:1px;height:21px;background-image:linear-gradient(#7c7c7c 3px,transparent 3px);background-size:1px 4px;"></div>
<svg style="left:244px;top:268.5px" width="4" height="7" viewBox="0 0 4 7"><path d="M0 0V7L4 3.5Z" fill="#222"/></svg>
<span class="t" style="left:258.1px;top:265.0px;line-height:14px;font-size:11px;color:#121a36;letter-spacing:0.056px;">X</span>
<span class="t" style="left:278.1px;top:265.0px;line-height:14px;font-size:11px;color:#121a36;letter-spacing:-0.025px;">00</span>
<span class="t" style="left:306.9px;top:265.0px;line-height:14px;font-size:11px;color:#121a36;letter-spacing:0.057px;">50011</span>
<span class="t" style="left:368.1px;top:265.0px;line-height:14px;font-size:11px;color:#121a36;letter-spacing:-0.151px;">Lešenie Eurostandard</span>
<span class="t" style="left:630.1px;top:265.0px;line-height:14px;font-size:11px;color:#121a36;letter-spacing:-0.252px;">Lešenie</span>
<span class="t" style="left:712.1px;top:265.0px;line-height:14px;font-size:11px;color:#121a36;letter-spacing:-0.1px;">ks</span>
<span class="t" style="left:742px;top:265.0px;line-height:14px;font-size:11px;color:#121a36;width:81.3px;text-align:right;letter-spacing:-0.06px;">130,00</span>
<span class="t" style="left:827px;top:265.0px;line-height:14px;font-size:11px;color:#121a36;width:95.3px;text-align:right;letter-spacing:-0.06px;">130,00</span>
<span class="t" style="left:926px;top:265.0px;line-height:14px;font-size:11px;color:#121a36;width:84.3px;text-align:right;letter-spacing:-0.06px;">200,00</span>
<span class="t" style="left:1116px;top:265.0px;line-height:14px;font-size:11px;color:#121a36;width:100.3px;text-align:right;letter-spacing:-0.06px;">50,00</span>
<div style="left:254px;top:302.5px;width:1018px;height:1px;background:#cbcbe6;"></div>
<span class="t" style="left:278.1px;top:286.0px;line-height:14px;font-size:11px;color:#121a36;letter-spacing:-0.025px;">00</span>
<span class="t" style="left:306.9px;top:286.0px;line-height:14px;font-size:11px;color:#121a36;letter-spacing:-0.105px;">50010</span>
<span class="t" style="left:368.1px;top:286.0px;line-height:14px;font-size:11px;color:#121a36;letter-spacing:-0.387px;">Lešenie MODEX pojazdné</span>
<span class="t" style="left:630.1px;top:286.0px;line-height:14px;font-size:11px;color:#121a36;letter-spacing:-0.252px;">Lešenie</span>
<span class="t" style="left:712.1px;top:286.0px;line-height:14px;font-size:11px;color:#121a36;letter-spacing:-0.1px;">ks</span>
<span class="t" style="left:742px;top:286.0px;line-height:14px;font-size:11px;color:#121a36;width:81.3px;text-align:right;letter-spacing:-0.06px;">37,00</span>
<span class="t" style="left:827px;top:286.0px;line-height:14px;font-size:11px;color:#121a36;width:95.3px;text-align:right;letter-spacing:-0.06px;">37,00</span>
<div style="left:254px;top:323.5px;width:1018px;height:1px;background:#cbcbe6;"></div>
<span class="t" style="left:278.1px;top:307.0px;line-height:14px;font-size:11px;color:#121a36;letter-spacing:-0.025px;">00</span>
<span class="t" style="left:306.9px;top:307.0px;line-height:14px;font-size:11px;color:#121a36;letter-spacing:-0.105px;">50013</span>
<span class="t" style="left:368.1px;top:307.0px;line-height:14px;font-size:11px;color:#121a36;letter-spacing:-0.182px;">Lešenie pojazdné</span>
<span class="t" style="left:630.1px;top:307.0px;line-height:14px;font-size:11px;color:#121a36;letter-spacing:-0.252px;">Lešenie</span>
<span class="t" style="left:712.1px;top:307.0px;line-height:14px;font-size:11px;color:#121a36;letter-spacing:-0.1px;">ks</span>
<span class="t" style="left:742px;top:307.0px;line-height:14px;font-size:11px;color:#121a36;width:81.3px;text-align:right;letter-spacing:-0.06px;">20,00</span>
<span class="t" style="left:827px;top:307.0px;line-height:14px;font-size:11px;color:#121a36;width:95.3px;text-align:right;letter-spacing:-0.06px;">20,00</span>
<div style="left:254px;top:344.5px;width:1018px;height:1px;background:#cbcbe6;"></div>
<span class="t" style="left:278.1px;top:328.0px;line-height:14px;font-size:11px;color:#121a36;letter-spacing:-0.025px;">00</span>
<span class="t" style="left:306.9px;top:328.0px;line-height:14px;font-size:11px;color:#121a36;letter-spacing:-0.334px;">LIEK0001</span>
<span class="t" style="left:368.1px;top:328.0px;line-height:14px;font-size:11px;color:#121a36;letter-spacing:-0.239px;">Liek 0001</span>
<span class="t" style="left:712.1px;top:328.0px;line-height:14px;font-size:11px;color:#121a36;letter-spacing:-0.1px;">ks</span>
<span class="t" style="left:742px;top:328.0px;line-height:14px;font-size:11px;color:#121a36;width:81.3px;text-align:right;letter-spacing:-0.06px;">172,00</span>
<span class="t" style="left:827px;top:328.0px;line-height:14px;font-size:11px;color:#121a36;width:95.3px;text-align:right;letter-spacing:-0.06px;">172,00</span>
<span class="t" style="left:926px;top:328.0px;line-height:14px;font-size:11px;color:#121a36;width:84.3px;text-align:right;letter-spacing:-0.06px;">30,00</span>
<span class="t" style="left:1116px;top:328.0px;line-height:14px;font-size:11px;color:#121a36;width:100.3px;text-align:right;letter-spacing:-0.06px;">10,00</span>
<div style="left:254px;top:365.5px;width:1018px;height:1px;background:#cbcbe6;"></div>
<span class="t" style="left:278.1px;top:349.0px;line-height:14px;font-size:11px;color:#121a36;letter-spacing:-0.025px;">00</span>
<span class="t" style="left:306.9px;top:349.0px;line-height:14px;font-size:11px;color:#121a36;letter-spacing:-0.265px;">10001</span>
<span class="t" style="left:368.1px;top:349.0px;line-height:14px;font-size:11px;color:#121a36;letter-spacing:-0.187px;">Miska červená</span>
<span class="t" style="left:630.1px;top:349.0px;line-height:14px;font-size:11px;color:#121a36;letter-spacing:-0.166px;">Kuchynské n...</span>
<span class="t" style="left:712.1px;top:349.0px;line-height:14px;font-size:11px;color:#121a36;letter-spacing:-0.1px;">ks</span>
<span class="t" style="left:742px;top:349.0px;line-height:14px;font-size:11px;color:#121a36;width:81.3px;text-align:right;letter-spacing:-0.06px;">42,00</span>
<span class="t" style="left:827px;top:349.0px;line-height:14px;font-size:11px;color:#121a36;width:95.3px;text-align:right;letter-spacing:-0.06px;">42,00</span>
<span class="t" style="left:926px;top:349.0px;line-height:14px;font-size:11px;color:#121a36;width:84.3px;text-align:right;letter-spacing:-0.06px;">20,00</span>
<span class="t" style="left:1116px;top:349.0px;line-height:14px;font-size:11px;color:#121a36;width:100.3px;text-align:right;letter-spacing:-0.06px;">10,00</span>
<div style="left:254px;top:386.5px;width:1018px;height:1px;background:#cbcbe6;"></div>
<span class="t" style="left:278.1px;top:370.0px;line-height:14px;font-size:11px;color:#121a36;letter-spacing:-0.025px;">00</span>
<span class="t" style="left:306.9px;top:370.0px;line-height:14px;font-size:11px;color:#121a36;letter-spacing:-0.075px;">90000777</span>
<span class="t" style="left:368.1px;top:370.0px;line-height:14px;font-size:11px;color:#121a36;letter-spacing:-0.174px;">Nová skl.položka</span>
<span class="t" style="left:712.1px;top:370.0px;line-height:14px;font-size:11px;color:#121a36;letter-spacing:-0.1px;">ks</span>
<span class="t" style="left:742px;top:370.0px;line-height:14px;font-size:11px;color:#121a36;width:81.3px;text-align:right;letter-spacing:-0.06px;">18,00</span>
<span class="t" style="left:827px;top:370.0px;line-height:14px;font-size:11px;color:#121a36;width:95.3px;text-align:right;letter-spacing:-0.06px;">18,00</span>
<div style="left:254px;top:407.5px;width:1018px;height:1px;background:#cbcbe6;"></div>
<span class="t" style="left:278.1px;top:391.0px;line-height:14px;font-size:11px;color:#121a36;letter-spacing:-0.025px;">00</span>
<span class="t" style="left:306.9px;top:391.0px;line-height:14px;font-size:11px;color:#121a36;letter-spacing:-0.242px;">100095</span>
<span class="t" style="left:368.1px;top:391.0px;line-height:14px;font-size:11px;color:#121a36;letter-spacing:-0.488px;">Objímka 25mmm</span>
<span class="t" style="left:712.1px;top:391.0px;line-height:14px;font-size:11px;color:#121a36;letter-spacing:-0.1px;">ks</span>
<span class="t" style="left:742px;top:391.0px;line-height:14px;font-size:11px;color:#121a36;width:81.3px;text-align:right;letter-spacing:-0.06px;">430,00</span>
<span class="t" style="left:827px;top:391.0px;line-height:14px;font-size:11px;color:#121a36;width:95.3px;text-align:right;letter-spacing:-0.06px;">430,00</span>
<div style="left:254px;top:428.5px;width:1018px;height:1px;background:#cbcbe6;"></div>
<span class="t" style="left:278.1px;top:412.0px;line-height:14px;font-size:11px;color:#121a36;letter-spacing:-0.025px;">00</span>
<span class="t" style="left:306.9px;top:412.0px;line-height:14px;font-size:11px;color:#121a36;letter-spacing:-0.471px;">SUR11</span>
<span class="t" style="left:368.1px;top:412.0px;line-height:14px;font-size:11px;color:#121a36;letter-spacing:0.059px;">Olej</span>
<span class="t" style="left:712.1px;top:412.0px;line-height:14px;font-size:11px;color:#121a36;letter-spacing:0.087px;">kg</span>
<span class="t" style="left:742px;top:412.0px;line-height:14px;font-size:11px;color:#121a36;width:81.3px;text-align:right;letter-spacing:-0.06px;">48,26</span>
<span class="t" style="left:827px;top:412.0px;line-height:14px;font-size:11px;color:#121a36;width:95.3px;text-align:right;letter-spacing:-0.06px;">48,26</span>
<svg style="left:243px;top:469px" width="4" height="8" viewBox="0 0 4 8"><path d="M4 0V8L0 4.0Z" fill="#6d7890"/></svg>
<div style="left:253px;top:468px;width:1019px;height:9px;background:#9ba6b9;"></div>
<span class="t" style="left:246.5px;top:490.0px;line-height:14px;font-size:11px;color:#121a36;letter-spacing:-0.291px;">152 záznamov</span>
<div style="left:327px;top:484px;width:1px;height:25px;background:#eef1f8;"></div>
<svg style="left:339px;top:490.5px" width="15" height="13" viewBox="0 0 16 14"><path d="M0.8 0.8H15.2L9.5 7.5V13H6.5V7.5Z" fill="#f1f3f8" stroke="#5d6578" stroke-width="1.1" stroke-linejoin="round"/></svg>
<svg style="left:368.5px;top:495.5px" width="5" height="3" viewBox="0 0 5 3"><path d="M0 0H5L2.5 3Z" fill="#1c2438"/></svg>
<svg style="left:752.7px;top:520.8px" width="18" height="6" viewBox="0 0 18 6"><rect x="0.0" y="0" width="1" height="1" fill="#aab2c6"/><rect x="3.0" y="0" width="1" height="1" fill="#aab2c6"/><rect x="6.0" y="0" width="1" height="1" fill="#aab2c6"/><rect x="9.0" y="0" width="1" height="1" fill="#aab2c6"/><rect x="12.0" y="0" width="1" height="1" fill="#aab2c6"/><rect x="15.0" y="0" width="1" height="1" fill="#aab2c6"/><rect x="1.5" y="2" width="1" height="1" fill="#aab2c6"/><rect x="4.5" y="2" width="1" height="1" fill="#aab2c6"/><rect x="7.5" y="2" width="1" height="1" fill="#aab2c6"/><rect x="10.5" y="2" width="1" height="1" fill="#aab2c6"/><rect x="13.5" y="2" width="1" height="1" fill="#aab2c6"/><rect x="16.5" y="2" width="1" height="1" fill="#aab2c6"/><rect x="0.0" y="4" width="1" height="1" fill="#aab2c6"/><rect x="3.0" y="4" width="1" height="1" fill="#aab2c6"/><rect x="6.0" y="4" width="1" height="1" fill="#aab2c6"/><rect x="9.0" y="4" width="1" height="1" fill="#aab2c6"/><rect x="12.0" y="4" width="1" height="1" fill="#aab2c6"/><rect x="15.0" y="4" width="1" height="1" fill="#aab2c6"/></svg>
<!-- bottom tabs -->
<div style="left:236px;top:562px;width:1054px;height:292px;border:1px solid #9aa4ba;background:#d4d9ea;"></div>
<div style="left:236px;top:534px;width:83px;height:28px;border:1px solid #9aa4ba;border-bottom:none;background:#cfd5e7;"></div>
<div style="left:318px;top:534px;width:90px;height:29px;border:1px solid #9aa4ba;border-bottom:none;background:#d4d9ea;"></div>
<div style="left:407px;top:534px;width:80px;height:28px;border:1px solid #9aa4ba;border-bottom:none;background:#cfd5e7;"></div>
<div style="left:486px;top:534px;width:90px;height:28px;border:1px solid #9aa4ba;border-bottom:none;background:#cfd5e7;"></div>
<div style="left:575px;top:534px;width:138.5px;height:28px;border:1px solid #9aa4ba;border-bottom:none;background:#cfd5e7;"></div>
<div style="left:712.5px;top:534px;width:113.5px;height:28px;border:1px solid #9aa4ba;border-bottom:none;background:#cfd5e7;"></div>
<div style="left:825px;top:534px;width:76px;height:28px;border:1px solid #9aa4ba;border-bottom:none;background:#cfd5e7;"></div>
<svg style="left:247px;top:540px" width="14" height="13.5" viewBox="0 0 15 15"><rect x="0.5" y="0.5" width="14" height="14" fill="#f6f8fc" stroke="#8492ab"/><rect x="2.5" y="2" width="4" height="1.2" fill="#7b88a0"/><path d="M3 5.5H12M3 7.5H12M3 9.5H12M3 11.5H12" stroke="#6b7890" stroke-width="1"/></svg>
<span class="t" style="left:264.9px;top:540.4px;line-height:14px;font-size:11px;color:#121a36;letter-spacing:-0.003px;">Pohyby</span>
<svg style="left:331px;top:540px" width="14" height="14" viewBox="0 0 15 15"><rect x="0.5" y="0.5" width="14" height="14" fill="#f7fbff" stroke="#6a7fa8"/><rect x="2" y="2" width="11" height="11" fill="#dce9f7"/><circle cx="9.5" cy="4.8" r="1.9" fill="#f08a2a"/><path d="M2 13V10L6 6L10 10.5L13 8.5V13Z" fill="#3d5f93"/><path d="M2 13V11.5L6 8L10 12L13 10.5V13Z" fill="#9fb7d6"/></svg>
<span class="t" style="left:348.7px;top:540.4px;line-height:14px;font-size:12.3px;color:#121a36;font-weight:bold;letter-spacing:-0.121px;">Obrázky</span>
<svg style="left:420.5px;top:539px" width="10.5" height="16" viewBox="0 0 10 15"><path d="M2 5V10.500A3 3 0 0 0 8 10.500V3.500A2.200 2.200 0 0 0 3.600 3.500V10A1.200 1.200 0 0 0 6 10V5" fill="none" stroke="#555b66" stroke-width="1.300" stroke-linecap="round"/></svg>
<span class="t" style="left:436.1px;top:540.4px;line-height:14px;font-size:11px;color:#121a36;letter-spacing:-0.293px;">Prílohy</span>
<svg style="left:498px;top:540px" width="15" height="15" viewBox="0 0 15 15"><rect x="0.5" y="0.5" width="14" height="14" fill="#f0f0f0" stroke="#8a8f98"/><rect x="2" y="2" width="3" height="3" fill="#8f949c"/><rect x="6" y="2" width="3" height="3" fill="#8f949c"/><rect x="10" y="2" width="3" height="3" fill="#8f949c"/><rect x="2" y="6" width="3" height="3" fill="#8f949c"/><rect x="6" y="6" width="3" height="3" fill="#8f949c"/><rect x="10" y="6" width="3" height="3" fill="#8f949c"/><rect x="2" y="10" width="3" height="3" fill="#8f949c"/><rect x="6" y="10" width="3" height="3" fill="#8f949c"/><rect x="10" y="10" width="3" height="3" fill="#8f949c"/></svg>
<span class="t" style="left:516.1px;top:540.4px;line-height:14px;font-size:11px;color:#121a36;letter-spacing:0.067px;">Varianty</span>
<svg style="left:587px;top:540px" width="15" height="15" viewBox="0 0 15 15"><rect x="0.5" y="0.5" width="10" height="9" fill="#f3f5f9" stroke="#7b8496"/><path d="M0.5 3.500H10.500M0.5 6.500H10.500M4 0.5V9.500M7.500 0.5V9.500" stroke="#7b8496" stroke-width="0.8"/><rect x="5.500" y="6.500" width="9" height="8" fill="#eef1f6" stroke="#7b8496"/><path d="M7 11L9.500 13L13.500 8" stroke="#5c6678" stroke-width="1.3" fill="none"/></svg>
<span class="t" style="left:604.1px;top:540.4px;line-height:14px;font-size:11px;color:#121a36;letter-spacing:-0.034px;">Šarže/exspirácie</span>
<svg style="left:726px;top:539px" width="13" height="16" viewBox="0 0 13 16"><rect x="0.5" y="0.5" width="6" height="4" fill="#f3f5f9" stroke="#6f7889"/><rect x="6.500" y="6" width="6" height="4" fill="#f3f5f9" stroke="#6f7889"/><rect x="6.500" y="11.500" width="6" height="4" fill="#f3f5f9" stroke="#6f7889"/><path d="M2.500 4.500V13.500H6.500M2.500 8H6.500" stroke="#6f7889" fill="none"/></svg>
<span class="t" style="left:741.3px;top:540.4px;line-height:14px;font-size:11px;color:#121a36;letter-spacing:-0.071px;">Komponenty</span>
<svg style="left:837.6px;top:540px" width="14.5" height="14.5" viewBox="0 0 14 14"><circle cx="5" cy="5" r="3" fill="none" stroke="#6a7284" stroke-width="2.600" stroke-dasharray="1.700 1.200"/><circle cx="5" cy="5" r="2.300" fill="none" stroke="#6a7284" stroke-width="1.400"/><circle cx="10.500" cy="10.500" r="2.200" fill="none" stroke="#6a7284" stroke-width="2" stroke-dasharray="1.300 1"/><circle cx="10.500" cy="10.500" r="1.600" fill="none" stroke="#6a7284" stroke-width="1"/></svg>
<span class="t" style="left:855px;top:540.4px;line-height:14px;font-size:11px;color:#121a36;letter-spacing:-0.25px;">Výroba</span>
<div style="left:248px;top:576px;width:12px;height:12px;background:#fff;border:1px solid #7c879e;"></div>
<svg style="left:250px;top:578px" width="9" height="8" viewBox="0 0 9 8"><path d="M1 4L3.500 6.500L8 1" stroke="#1c2438" stroke-width="1.300" fill="none"/></svg>
<span class="t" style="left:264.9px;top:575.0px;line-height:14px;font-size:11px;color:#121a36;letter-spacing:-0.267px;">Edit mód</span>
<svg style="left:317px;top:573.5px" width="17" height="17" viewBox="0 0 17 17"><path d="M5.500 0.8H10.500V5.500H15.200V10.500H10.500V15.200H5.500V10.500H0.8V5.500H5.500Z" fill="#a8d136" stroke="#6d9a12" stroke-width="1.200" stroke-linejoin="round"/></svg>
<svg style="left:342px;top:573.5px" width="17" height="17" viewBox="0 0 17 17"><path d="M5.500 0.8H10.500V5.500H15.200V10.500H10.500V15.200H5.500V10.500H0.8V5.500H5.500Z" fill="#a8d136" stroke="#6d9a12" stroke-width="1.200" stroke-linejoin="round"/><circle cx="12.500" cy="12.500" r="4" fill="#5fb336" stroke="#fff" stroke-width="0.8"/><path d="M10.300 12.500H14.700M12.500 10.300V14.700" stroke="#fff" stroke-width="1.300"/></svg>
<svg style="left:370px;top:575px" width="13" height="14" viewBox="0 0 14 15"><path d="M1 1L13 14M13 1L1 14" stroke="#d31b1b" stroke-width="1.7" stroke-linecap="round" fill="none"/></svg>
<svg style="left:395px;top:575px" width="15" height="13" viewBox="0 0 15 13"><rect x="0.5" y="0.5" width="14" height="12" fill="#f6f8fc" stroke="#5b78b0"/><rect x="2" y="2" width="11" height="9" fill="#d9b25a"/><rect x="2" y="7" width="11" height="4" fill="#5f9a3e"/><circle cx="7.500" cy="5.500" r="2.300" fill="#e5722a"/><circle cx="7.500" cy="5.500" r="0.9" fill="#f7d36a"/></svg>
<svg style="left:421px;top:575px" width="16" height="14.0" viewBox="0 0 16 14"><path d="M2 7A6 5.5 0 0 1 12.5 4" fill="none" stroke="#3fae36" stroke-width="3"/><path d="M9.5 5.8L15.5 6.3L14.8 0.8Z" fill="#3fae36"/><path d="M14 7A6 5.5 0 0 1 3.5 10" fill="none" stroke="#58c248" stroke-width="3"/><path d="M6.5 8.2L0.5 7.7L1.2 13.2Z" fill="#58c248"/></svg>
<div style="left:446px;top:572px;width:154px;height:20px;background:#fff;border:1px solid #a9b3c9;"></div>
<svg style="left:587px;top:580.0px" width="7" height="4" viewBox="0 0 7 4"><path d="M0 0H7L3.5 4Z" fill="#6f7a92"/></svg>
<span class="t" style="left:605.5px;top:575.0px;line-height:14px;font-size:11px;color:#121a36;letter-spacing:-0.066px;">Zobrazenie</span>
<div style="left:665px;top:572px;width:190px;height:20px;background:#fff;border:1px solid #a9b3c9;"></div>
<span class="t" style="left:669.3px;top:575.0px;line-height:14px;font-size:11px;color:#121a36;letter-spacing:-0.107px;">Veľmi veľké ikony</span>
<svg style="left:842px;top:580.0px" width="7" height="4" viewBox="0 0 7 4"><path d="M0 0H7L3.5 4Z" fill="#6f7a92"/></svg>
<div style="left:243px;top:599px;width:1045px;height:247px;background:#fff;border:1px solid #8d97b0;"></div>
<svg style="left:261px;top:610px" width="6" height="6" viewBox="0 0 6 6"><path d="M6 0V6H0Z" fill="#5a6070"/></svg>
<span class="t" style="left:280.5px;top:605.5px;line-height:16px;font-size:13px;color:#0a0ae0;font-weight:bold;letter-spacing:-0.45px;">OBRVELKY</span>
<div style="left:351px;top:613px;width:930px;height:1px;background:#8d97b0;"></div>
<div style="left:305px;top:636px;width:124px;height:124px;border:1px solid #b2b2b2;background:#fff;"></div>
<span class="t" style="left:309.5px;top:771.0px;line-height:14px;font-size:11px;color:#121a36;letter-spacing:-0.556px;">50011_OBRVELKY.JPEG</span>
<svg style="left:305px;top:636px" width="124" height="124" viewBox="0 0 124 124"><g stroke="#9a7474" stroke-width="0.8" fill="none"><path d="M7.300 7.300L115.500 25.500M7.300 13L115.500 32M7.300 18L42 24"/><path d="M10 8L22 15.500L22 10M22 15.500L40 13M44 13.500L60 22M78 19.500L96 28L96 22.500M96 28L113 26"/><path d="M22 10V16M60 16.500V22M96 22.500V28.500"/><path d="M7.300 42L42.700 50M7.300 48L42.700 56M13.600 46L49 53M49 53L84.600 60M84.600 60L120.600 66M78 56L113.700 62M78 62L113.700 68"/><path d="M12 44L24 52L24 46.500M24 52L41 50.500M82 58L97 66L97 60.500M97 66L112 63"/><path d="M7.300 78L42.700 86M7.300 84L42.700 92M13.600 82L49 89M49 89L84.600 96M84.600 96L120.600 102M78 92L113.700 98M78 98L113.700 104"/><path d="M12 80L24 88L24 82.500M24 88L41 86.500M44 87L60 96M82 94L97 102L97 96.500M97 102L112 99"/></g><g stroke="#c9784e" stroke-width="0.400"><path d="M7.300 22.800L32 24.500L48.500 29L42.500 32.200L13.600 27.500Z" fill="#f2a77c"/><path d="M81 35.500L115.500 40L120.600 42.700L114.600 45L84.600 40Z" fill="#f2a77c"/><path d="M7.300 58L13.600 58.500L44.600 64.600L42.700 67.500L7.300 61.300Z" fill="#f2a77c"/><path d="M81 71L115.500 75.500L120.600 78.200L114.600 80.600L82 75Z" fill="#f2a77c"/><path d="M56 31L79 33.700L81.500 38.200L58.500 35.800Z" fill="#a8682c"/><path d="M52 21.800L62 22.700L61 29.400L51 28.600Z" fill="#b97534"/><path d="M45.500 65.500L73.700 67.300L77.500 73L46.400 68.500Z" fill="#a8682c"/></g><g stroke="#6f6464" stroke-width="0.900" fill="none"><path d="M49 31L66.400 62M53 31L70 61M50 34H54M52 38H56.500M54.500 42H59M57 46H61.500M59 50H63.500M61.500 54H66M64 58H68"/><path d="M79 70L61 97.500M82 71L64.500 97"/></g><g stroke="#6a2c2c" stroke-width="1.700" fill="none"><path d="M7.3 7.3V99"/><path d="M13.6 27V95.5"/><path d="M42.7 13.6V106"/><path d="M49 32V102"/><path d="M78 19V113"/><path d="M84.6 41V108"/><path d="M113.7 25.5V120"/><path d="M120.6 44.5V115.5"/><path d="M7.300 30Q9 26 13.600 28M42.700 36Q44.500 31 49 33M78 44Q80 40 84.600 42M113.700 48Q115.500 44 120.600 46M7.300 66Q9 62 13.600 64M42.700 72Q44.500 68 49 69M78 80Q80 76 84.600 77.500M113.700 84Q115.500 80 120.600 82" stroke-width="1"/></g><path d="M6.1 102L7.3 98L8.5 102Z" fill="#c04040"/><path d="M12.4 98.5L13.6 94.5L14.799999999999999 98.5Z" fill="#c04040"/><path d="M41.5 109L42.7 105L43.900000000000006 109Z" fill="#c04040"/><path d="M47.8 105L49 101L50.2 105Z" fill="#c04040"/><path d="M76.8 116L78 112L79.2 116Z" fill="#c04040"/><path d="M83.39999999999999 111L84.6 107L85.8 111Z" fill="#c04040"/><path d="M112.5 123L113.7 119L114.9 123Z" fill="#c04040"/><path d="M119.39999999999999 118.5L120.6 114.5L121.8 118.5Z" fill="#c04040"/></svg>
<!-- status bar -->
<div style="left:8px;top:863px;width:1291px;height:30px;background:#d2d7e8;border-bottom:1px solid #aeb5c8;border-top:1px solid #e3e7f1;"></div>
<svg style="left:17px;top:870.5px" width="16" height="15" viewBox="0 0 16 15"><path d="M1 9.500C1 6.500 4 5.500 6.500 6.500C9 7.500 12 6.500 12 9.500C12 11.500 9 12.500 6.500 11.500C4 10.500 1 11.500 1 9.500Z" fill="#cfe2f7" stroke="#6f9ad1" stroke-width="0.9"/><circle cx="11" cy="4" r="2.600" fill="#f2c48f" stroke="#b98345" stroke-width="0.7"/><path d="M7 14C7 9.500 15 9.500 15 14Z" fill="#3f74c5" stroke="#2b548f" stroke-width="0.7"/></svg>
<span class="t" style="left:36.1px;top:870.7px;line-height:14px;font-size:11.5px;color:#66779f;letter-spacing:-0.383px;">Dudášová</span>
<svg style="left:99.5px;top:872px" width="15" height="11" viewBox="0 0 15 11"><rect x="0" y="0" width="15" height="3.500" fill="#f4f4f4"/><rect x="0" y="3.500" width="15" height="3.500" fill="#2d56b5"/><rect x="0" y="7" width="15" height="3.500" fill="#dd2a2a"/><path d="M2.500 2H7.500V6.500C7.500 8 5 9 5 9C5 9 2.500 8 2.500 6.500Z" fill="#dd2a2a" stroke="#fff" stroke-width="0.7"/><path d="M5 3.200V7.500M3.800 4.500H6.200M3.500 5.800H6.500" stroke="#fff" stroke-width="0.7"/><rect x="0.250" y="0.250" width="14.500" height="10" fill="none" stroke="#9aa3b8" stroke-width="0.5"/></svg>
<svg style="left:134.8px;top:870px" width="12" height="15" viewBox="0 0 12 15"><path d="M0.500 2.500V12.500C0.500 15 11.500 15 11.500 12.500V2.500" fill="#f0b840" stroke="#b47d14" stroke-width="0.9"/><ellipse cx="6" cy="2.500" rx="5.500" ry="2" fill="#fbdc7e" stroke="#b47d14" stroke-width="0.9"/><path d="M0.500 6C0.500 8.200 11.500 8.200 11.500 6M0.500 9.300C0.500 11.500 11.500 11.500 11.500 9.300" fill="none" stroke="#b47d14" stroke-width="0.8"/></svg>
<span class="t" style="left:151.9px;top:870.7px;line-height:14px;font-size:11.5px;color:#66779f;letter-spacing:-0.363px;">IVANAD test (MySQL/IVANADtest, V2246)</span>
<div style="left:366px;top:868px;width:1px;height:21px;background:#eef1f8;"></div>
<svg style="left:382px;top:872px" width="13" height="13" viewBox="0 0 13 13"><circle cx="6.500" cy="6.500" r="6" fill="#e8963a" stroke="#b96a18" stroke-width="0.9"/><circle cx="6.500" cy="6.500" r="4.300" fill="#f5c27a"/><path d="M3.800 6.700L5.800 8.700L9.500 4.300" stroke="#fff" stroke-width="1.700" fill="none"/></svg>
<span class="t" style="left:400.5px;top:870.7px;line-height:14px;font-size:11.5px;color:#66779f;letter-spacing:-0.04px;">2.32.532</span>
<div style="left:456px;top:868px;width:1px;height:21px;background:#eef1f8;"></div>
<svg style="left:467px;top:871px" width="15" height="16" viewBox="0 0 15 16"><rect x="0.500" y="0.500" width="13" height="11" fill="#f3f7ee" stroke="#5b7a4c"/><rect x="3" y="2.500" width="8" height="1.500" fill="#555"/><circle cx="4.500" cy="9" r="2.300" fill="#d8342c"/><path d="M3 10.500V15L4.500 13.800L6 15V10.500Z" fill="#d8342c"/><circle cx="11" cy="11.500" r="3.800" fill="#3bab3b" stroke="#fff" stroke-width="0.7"/><path d="M9 11.600L10.500 13.100L13 10" stroke="#fff" stroke-width="1.400" fill="none"/></svg>
<svg style="left:1127px;top:870px" width="17" height="16" viewBox="0 0 17 16"><rect x="0.500" y="0.500" width="12" height="15" fill="#fbfcfe" stroke="#6b7890"/><path d="M2 3L3 4.200L4.800 1.800M2 7L3 8.200L4.800 5.800M2 11L3 12.200L4.800 9.800" stroke="#d32f2f" stroke-width="1.100" fill="none"/><path d="M6.500 3.500H10.500M6.500 7.500H9M6.500 11.500H8" stroke="#8f9bb2"/><path d="M6.500 14L7.500 10.500L14 3.500L16.500 6L10 13Z" fill="#f2a83a" stroke="#a86a12" stroke-width="0.7"/><path d="M6.500 14L7.500 10.500L10 13Z" fill="#f6e0b8" stroke="#a86a12" stroke-width="0.5"/></svg>
<span class="t" style="left:1146.1px;top:870.5px;line-height:14px;font-size:11.5px;color:#66779f;letter-spacing:-0.364px;">3 dokončené úlohy</span>
<svg style="left:1283px;top:876px" width="6" height="3.5" viewBox="0 0 6 3.5"><path d="M0 0H6L3.0 3.5Z" fill="#5d6780"/></svg>
<!-- report preview overlay -->
<div style="left:865px;top:402px;width:422px;height:443px;background:#fff;overflow:hidden;border-top:1px dashed #7a7a7a;border-left:1px dashed #7a7a7a;"><div style="left:-1px;top:-1px;width:422px;height:443px;"><div style="left:1px;top:1px;width:209px;height:19px;background:#c6c6c6;"></div><div style="left:210px;top:1px;width:136px;height:19px;background:#c2c2c2;border-left:1px solid #cfcfcf;"></div><div style="left:346px;top:1px;width:76px;height:19px;background:#c6c6c6;border-left:1px solid #cfcfcf;"></div><span class="t" style="left:6.0px;top:5.0px;line-height:13px;font-size:10.5px;color:#111;font-weight:bold;letter-spacing:-0.122px;">Výdajka-Zápožičkový list</span><span class="t" style="left:335px;top:4.0px;line-height:13px;font-size:10.5px;color:#111;font-weight:bold;width:81px;text-align:right;letter-spacing:-0.25px;">220014</span><div style="left:1px;top:24px;width:421px;height:190px;border:1px solid #b4b4b4;"></div><div style="left:209px;top:24px;width:1px;height:190px;background:#b4b4b4;"></div><div style="left:1px;top:135px;width:421px;height:1px;background:#b4b4b4;"></div><div style="left:1px;top:170px;width:209px;height:1px;background:#b4b4b4;"></div><svg style="left:11px;top:46px" width="52.5" height="52.5" viewBox="0 0 52 52"><rect width="52" height="52" fill="#f90808"/><path d="M52 0.5A46 25.500 0 0 0 52 51.500V47A33 21 0 0 1 52 5Z" fill="#fff"/></svg><span class="t" style="left:78.5px;top:45.5px;line-height:10px;font-size:7.5px;color:#8a8a8a;letter-spacing:0.038px;">Prenajímateľ:</span><span class="t" style="left:78.5px;top:57.8px;line-height:11px;font-size:9px;color:#111;font-weight:bold;letter-spacing:-0.138px;">Ivanad s.r.o.</span><span class="t" style="left:78.5px;top:70.0px;line-height:10px;font-size:8px;color:#0a0a0a;letter-spacing:-0.081px;">Hlavná 587/2</span><span class="t" style="left:78.5px;top:79.5px;line-height:10px;font-size:8px;color:#0a0a0a;letter-spacing:-0.188px;">02601 Dolný Kubín</span><span class="t" style="left:78.5px;top:90.3px;line-height:10px;font-size:8px;color:#0a0a0a;letter-spacing:-0.226px;">Slovensko</span><span class="t" style="left:6.0px;top:122.5px;line-height:10px;font-size:7px;color:#0a0a0a;letter-spacing:-0.187px;">IČO: 31531588</span><span class="t" style="left:60.5px;top:122.5px;line-height:10px;font-size:7px;color:#0a0a0a;letter-spacing:-0.214px;">IČDPH: SK20208888</span><span class="t" style="left:142.0px;top:122.5px;line-height:10px;font-size:7px;color:#0a0a0a;letter-spacing:0.175px;">DIČ:</span><span class="t" style="left:232.5px;top:45.5px;line-height:10px;font-size:7.5px;color:#8a8a8a;letter-spacing:-0.098px;">Nájomca:</span><span class="t" style="left:232.5px;top:57.8px;line-height:11px;font-size:9px;color:#111;font-weight:bold;letter-spacing:-0.355px;">HLAKOV, s.r.o.</span><span class="t" style="left:232.5px;top:70.9px;line-height:11px;font-size:9px;color:#111;font-weight:bold;letter-spacing:-0.106px;">Sudomerická 2345/1</span><span class="t" style="left:232.5px;top:80.8px;line-height:11px;font-size:9px;color:#111;font-weight:bold;letter-spacing:-0.257px;">909 01 Skalica</span><span class="t" style="left:215.0px;top:122.5px;line-height:10px;font-size:7px;color:#0a0a0a;letter-spacing:-0.157px;">IČO: 36259586</span><span class="t" style="left:273.0px;top:122.5px;line-height:10px;font-size:7px;color:#0a0a0a;letter-spacing:-0.327px;">IČDPH SK2021801276</span><span class="t" style="left:357.5px;top:122.5px;line-height:10px;font-size:7px;color:#0a0a0a;letter-spacing:-0.096px;">DIČ: 2021801276</span><span class="t" style="left:6.0px;top:139.3px;line-height:10px;font-size:7px;color:#0a0a0a;letter-spacing:-0.225px;">Číslo zákazky: 20220405-103718</span><span class="t" style="left:6.0px;top:149.6px;line-height:10px;font-size:7px;color:#0a0a0a;letter-spacing:-0.088px;">Stavba:</span><span class="t" style="left:48.5px;top:149.6px;line-height:10px;font-size:7.5px;color:#111;font-weight:bold;letter-spacing:-0.186px;">Stavba škôlka</span><span class="t" style="left:6.0px;top:159.2px;line-height:10px;font-size:7px;color:#0a0a0a;letter-spacing:-0.175px;">Zapožičané:</span><span class="t" style="left:48.5px;top:159.2px;line-height:10px;font-size:7.5px;color:#111;font-weight:bold;letter-spacing:-0.063px;">30.03.2022</span><span class="t" style="left:118.0px;top:159.2px;line-height:10px;font-size:7px;color:#0a0a0a;letter-spacing:0.069px;">Čas: 11:04</span><span class="t" style="left:6.0px;top:200.5px;line-height:10px;font-size:7px;color:#0a0a0a;letter-spacing:0.314px;">Tel.:</span><span class="t" style="left:78.5px;top:200.5px;line-height:10px;font-size:7px;color:#0a0a0a;letter-spacing:-0.177px;">Mail: kubiny@hhh.sk</span><span class="t" style="left:215.0px;top:200.5px;line-height:10px;font-size:7px;color:#0a0a0a;letter-spacing:-0.127px;">Ivan Veľký/0907/888 555, mail@ivan.sk</span><div style="left:1px;top:214px;width:421px;height:13px;background:#e9e9e9;"></div><div style="left:1px;top:226.5px;width:421px;height:1px;background-image:linear-gradient(90deg,#5a5a5a 1px,transparent 1px);background-size:2.500px 1px;"></div><div style="left:1px;top:238.5px;width:421px;height:1px;background-image:linear-gradient(90deg,#5a5a5a 1px,transparent 1px);background-size:2.500px 1px;"></div><div style="left:1px;top:251.5px;width:421px;height:1px;background-image:linear-gradient(90deg,#5a5a5a 1px,transparent 1px);background-size:2.500px 1px;"></div><div style="left:1px;top:252.5px;width:421px;height:3px;background:#e4e4e4;"></div><span class="t" style="left:2.5px;top:216.0px;line-height:8px;font-size:5.5px;color:#222;font-weight:bold;letter-spacing:0.452px;">P.č.</span><span class="t" style="left:17.5px;top:216.0px;line-height:8px;font-size:5.5px;color:#222;font-weight:bold;letter-spacing:-0.075px;">Číslo tovaru</span><span class="t" style="left:89.5px;top:216.0px;line-height:8px;font-size:5.5px;color:#222;font-weight:bold;letter-spacing:-0.119px;">Popis tovaru</span><span class="t" style="left:275px;top:216.0px;line-height:8px;font-size:5.5px;color:#222;font-weight:bold;width:46.5px;text-align:right;">Množstvo</span><span class="t" style="left:332px;top:216.0px;line-height:8px;font-size:5.5px;color:#222;font-weight:bold;">MJ</span><span class="t" style="left:3px;top:228.5px;line-height:10px;font-size:7px;color:#0a0a0a;">1)</span><span class="t" style="left:17.5px;top:228.5px;line-height:10px;font-size:7px;color:#0a0a0a;letter-spacing:-0.071px;">50012</span><span class="t" style="left:89.5px;top:228.5px;line-height:10px;font-size:7px;color:#0a0a0a;letter-spacing:-0.243px;">Lešenie ENZIAN 0,6 X 1,5 M</span><span class="t" style="left:275px;top:228.5px;line-height:10px;font-size:7px;color:#0a0a0a;width:46.5px;text-align:right;">5,00</span><span class="t" style="left:332px;top:228.5px;line-height:10px;font-size:7px;color:#0a0a0a;">ks</span><span class="t" style="left:3px;top:240.4px;line-height:10px;font-size:7px;color:#0a0a0a;">2)</span><span class="t" style="left:17.5px;top:240.4px;line-height:10px;font-size:7px;color:#0a0a0a;letter-spacing:0.033px;">50011</span><span class="t" style="left:89.5px;top:240.4px;line-height:10px;font-size:7px;color:#0a0a0a;letter-spacing:-0.198px;">Lešenie Eurostandard</span><span class="t" style="left:275px;top:240.4px;line-height:10px;font-size:7px;color:#0a0a0a;width:46.5px;text-align:right;">50,00</span><span class="t" style="left:332px;top:240.4px;line-height:10px;font-size:7px;color:#0a0a0a;">ks</span><span class="t" style="left:235.5px;top:254.5px;line-height:10px;font-size:7px;color:#0a0a0a;letter-spacing:-0.21px;">Suma položiek:</span><span class="t" style="left:275px;top:254.5px;line-height:10px;font-size:7px;color:#0a0a0a;width:46.5px;text-align:right;">55,00</span><span class="t" style="left:235.5px;top:264.4px;line-height:10px;font-size:7px;color:#0a0a0a;letter-spacing:-0.074px;">Hmotnosť:</span><span class="t" style="left:275px;top:264.4px;line-height:10px;font-size:7px;color:#0a0a0a;width:46.5px;text-align:right;">0,00</span><span class="t" style="left:3.5px;top:303.5px;line-height:10px;font-size:7px;color:#0a0a0a;letter-spacing:-0.058px;">Za prenajímateľa vystavil:</span><span class="t" style="left:165.0px;top:303.5px;line-height:10px;font-size:7px;color:#0a0a0a;letter-spacing:0.035px;">Vydal:</span><span class="t" style="left:278.5px;top:304.0px;line-height:10px;font-size:6px;color:#0a0a0a;letter-spacing:0.015px;">Za nájomcu paličkovým písmom:</span><span class="t" style="left:278.5px;top:313.0px;line-height:10px;font-size:6px;color:#0a0a0a;letter-spacing:-0.008px;">(Meno priezvisko, pracovné zaradenie,  číslo OP )</span><span class="t" style="left:3.5px;top:313.3px;line-height:10px;font-size:7px;color:#0a0a0a;letter-spacing:-0.277px;">Dudášová</span><span class="t" style="left:26.5px;top:325.8px;line-height:10px;font-size:7px;color:#8a8a8a;font-weight:bold;letter-spacing:-0.083px;">▪ Sun Solutions s.r.o.</span><span class="t" style="left:43px;top:334.0px;line-height:6px;font-size:4.5px;color:#b0b0b0;">Jánošíkova 1585</span><span class="t" style="left:36px;top:339.0px;line-height:6px;font-size:4.5px;color:#b0b0b0;">026 01 Dolný Kubín</span><span class="t" style="left:36px;top:344.0px;line-height:6px;font-size:4.5px;color:#b0b0b0;">Tel: +421 910 219 218</span><span class="t" style="left:36px;top:348.5px;line-height:6px;font-size:5.5px;color:#a0a0a0;">www.ecosun.sk</span><svg style="left:81px;top:328px" width="34" height="38" viewBox="0 0 34 38"><path d="M2 30L10 14L9 26L13 20L13 27L17 23L19 27L24 12L22 8L27 4L29 10L24 12M31 1L6 37" fill="none" stroke="#8fa0d8" stroke-width="0.800"/></svg><div style="left:1px;top:351.5px;width:98px;height:1px;background-image:linear-gradient(90deg,#5a5a5a 1px,transparent 1px);background-size:2.500px 1px;"></div><span class="t" style="left:2.0px;top:352.8px;line-height:10px;font-size:7px;color:#0a0a0a;letter-spacing:-0.247px;">Pečiatka a podpis prenajímateľa</span><span class="t" style="left:2.5px;top:375.8px;line-height:10px;font-size:6px;color:#0a0a0a;letter-spacing:-0.012px;">Za dopravcu paličkovým písmom:</span><span class="t" style="left:2.5px;top:384.0px;line-height:10px;font-size:6px;color:#0a0a0a;letter-spacing:-0.165px;">(priezvisko, ŠPZ)</span><span class="t" style="left:2.0px;top:407.0px;line-height:10px;font-size:6px;color:#0a0a0a;letter-spacing:-0.189px;">Podpis dopravcu:</span><span class="t" style="left:278.5px;top:374.5px;line-height:10px;font-size:6px;color:#0a0a0a;letter-spacing:-0.127px;">Podpis nájomcu:</span></div></div>
<svg style="left:830px;top:503px" width="13" height="19" viewBox="0 0 13 19"><path d="M0.700 0.700V15.500L4.200 12.200L6.800 18L9.200 17L6.600 11.300H11.500Z" fill="#fff" stroke="#111" stroke-width="1" stroke-linejoin="round"/></svg>
</body></html>
